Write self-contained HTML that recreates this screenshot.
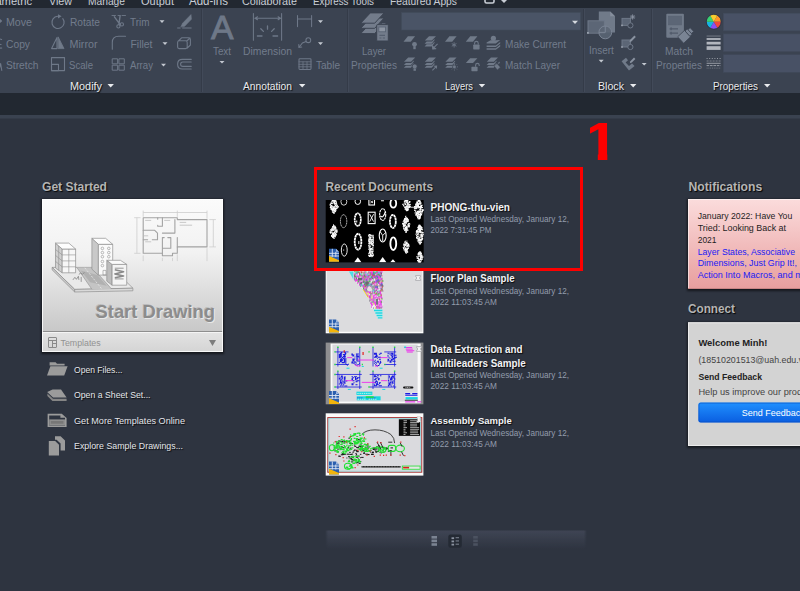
<!DOCTYPE html>
<html lang="en"><head><meta charset="utf-8"><title>AutoCAD Start</title>
<style>
html,body{margin:0;padding:0;background:#2e3440;overflow:hidden}
body{width:800px;height:591px;position:relative;font-family:"Liberation Sans",sans-serif}
svg{position:absolute;left:0;top:0;display:block}
text{font-family:"Liberation Sans",sans-serif;white-space:pre}
.sh{text-shadow:1px 1px 1px rgba(0,0,0,.85)}
.hd{text-shadow:1px 1px 1px rgba(0,0,0,.9)}
.eng{text-shadow:0 1px 0 rgba(255,255,255,.7)}
</style></head><body>
<svg width="800" height="591" viewBox="0 0 800 591">
<defs>
<linearGradient id="gCard" x1="0" y1="0" x2="0" y2="1"><stop offset="0" stop-color="#fbfbfb"/><stop offset=".35" stop-color="#f2f2f2"/><stop offset="1" stop-color="#bdbdbd"/></linearGradient>
<linearGradient id="gTpl" x1="0" y1="0" x2="0" y2="1"><stop offset="0" stop-color="#e3e3e3"/><stop offset="1" stop-color="#d4d4d4"/></linearGradient>
<linearGradient id="gPink" x1="0" y1="0" x2="0" y2="1"><stop offset="0" stop-color="#fbdcdc"/><stop offset="1" stop-color="#e89e9e"/></linearGradient>
<linearGradient id="gBtn" x1="0" y1="0" x2="0" y2="1"><stop offset="0" stop-color="#2090ff"/><stop offset="1" stop-color="#0a5ee0"/></linearGradient>
<linearGradient id="gBar" x1="0" y1="0" x2="0" y2="1"><stop offset="0" stop-color="#3f4554"/><stop offset="1" stop-color="#3f4554" stop-opacity="0"/></linearGradient>
<linearGradient id="gBarM" x1="0" y1="0" x2="1" y2="0"><stop offset="0" stop-color="#fff" stop-opacity="0"/><stop offset=".012" stop-color="#fff"/><stop offset=".988" stop-color="#fff"/><stop offset="1" stop-color="#fff" stop-opacity="0"/></linearGradient>
<mask id="mBar"><rect x="325" y="528" width="262" height="24" fill="url(#gBarM)"/></mask>
<filter id="fsh" x="-10%" y="-10%" width="120%" height="125%"><feGaussianBlur stdDeviation="1.2"/></filter>
</defs>

<rect x="0" y="0" width="800" height="8" fill="#222831"/>
<rect x="0" y="8" width="800" height="85" fill="#3b4351"/>
<rect x="0" y="93" width="800" height="22" fill="#222831"/>
<rect x="0" y="115" width="800" height="3" fill="#3a4250"/><rect x="0" y="118" width="800" height="1" fill="#343b48"/>
<text x="-22" y="5" font-size="11.73" fill="#c9ced6" textLength="54" lengthAdjust="spacingAndGlyphs" >Parametric</text>
<text x="49" y="5" font-size="11.24" fill="#c9ced6" textLength="23" lengthAdjust="spacingAndGlyphs" >View</text>
<text x="88" y="5" font-size="10.75" fill="#c9ced6" textLength="37" lengthAdjust="spacingAndGlyphs" >Manage</text>
<text x="141" y="5" font-size="11.54" fill="#c9ced6" textLength="33" lengthAdjust="spacingAndGlyphs" >Output</text>
<text x="189" y="5" font-size="12" fill="#c9ced6" textLength="39" lengthAdjust="spacingAndGlyphs" >Add-ins</text>
<text x="242" y="5" font-size="11.29" fill="#c9ced6" textLength="55" lengthAdjust="spacingAndGlyphs" >Collaborate</text>
<text x="313" y="5" font-size="10.32" fill="#c9ced6" textLength="61" lengthAdjust="spacingAndGlyphs" >Express Tools</text>
<text x="390" y="5" font-size="10.82" fill="#c9ced6" textLength="67" lengthAdjust="spacingAndGlyphs" >Featured Apps</text>
<rect x="485" y="-3" width="9" height="6" rx="1.5" fill="none" stroke="#c9ced6" stroke-width="1.6"/>
<path d="M501 0 l3 3 l3-3z" fill="#c9ced6"/>
<rect x="201" y="9" width="1" height="83" fill="#343b48"/>
<rect x="202" y="9" width="1" height="83" fill="#424a59"/>
<rect x="347" y="9" width="1" height="83" fill="#343b48"/>
<rect x="348" y="9" width="1" height="83" fill="#424a59"/>
<rect x="583" y="9" width="1" height="83" fill="#343b48"/>
<rect x="584" y="9" width="1" height="83" fill="#424a59"/>
<rect x="651" y="9" width="1" height="83" fill="#343b48"/>
<rect x="652" y="9" width="1" height="83" fill="#424a59"/>
<text x="70" y="89.5" font-size="11.5" fill="#e9ebee" textLength="32" lengthAdjust="spacingAndGlyphs" class="hd" >Modify</text>
<path d="M107.5 84 h6.4 l-3.2 3.6z" fill="#e9ebee"/>
<text x="243" y="89.5" font-size="11.5" fill="#e9ebee" textLength="49" lengthAdjust="spacingAndGlyphs" class="hd" >Annotation</text>
<path d="M299 84 h6.4 l-3.2 3.6z" fill="#e9ebee"/>
<text x="445" y="89.5" font-size="10.82" fill="#e9ebee" textLength="28" lengthAdjust="spacingAndGlyphs" class="hd" >Layers</text>
<path d="M478.75 84 h6.4 l-3.2 3.6z" fill="#e9ebee"/>
<text x="598" y="89.5" font-size="11.5" fill="#e9ebee" textLength="26" lengthAdjust="spacingAndGlyphs" class="hd" >Block</text>
<path d="M630 84 h6.4 l-3.2 3.6z" fill="#e9ebee"/>
<text x="713" y="89.5" font-size="11.45" fill="#e9ebee" textLength="45" lengthAdjust="spacingAndGlyphs" class="hd" >Properties</text>
<path d="M764 84 h6.4 l-3.2 3.6z" fill="#e9ebee"/>
<text x="6" y="25.5" font-size="11.16" fill="#727c8c" textLength="26" lengthAdjust="spacingAndGlyphs" >Move</text>
<text x="6" y="47.5" font-size="10.8" fill="#727c8c" textLength="24" lengthAdjust="spacingAndGlyphs" >Copy</text>
<text x="6" y="69" font-size="10.77" fill="#727c8c" textLength="32.5" lengthAdjust="spacingAndGlyphs" >Stretch</text>
<text x="70" y="25.5" font-size="10.69" fill="#727c8c" textLength="30" lengthAdjust="spacingAndGlyphs" >Rotate</text>
<text x="69.5" y="47.5" font-size="11.26" fill="#727c8c" textLength="28.0" lengthAdjust="spacingAndGlyphs" >Mirror</text>
<text x="69" y="69" font-size="10.07" fill="#727c8c" textLength="24" lengthAdjust="spacingAndGlyphs" >Scale</text>
<text x="130" y="25.5" font-size="10.44" fill="#727c8c" textLength="19.5" lengthAdjust="spacingAndGlyphs" >Trim</text>
<text x="130.5" y="47.5" font-size="10.94" fill="#727c8c" textLength="22.0" lengthAdjust="spacingAndGlyphs" >Fillet</text>
<text x="130" y="69" font-size="10.11" fill="#727c8c" textLength="23" lengthAdjust="spacingAndGlyphs" >Array</text>
<text x="316" y="69" font-size="10.54" fill="#727c8c" textLength="24" lengthAdjust="spacingAndGlyphs" >Table</text>
<text x="505" y="47.5" font-size="10.57" fill="#727c8c" textLength="61" lengthAdjust="spacingAndGlyphs" >Make Current</text>
<text x="505" y="69" font-size="10.5" fill="#727c8c" textLength="55" lengthAdjust="spacingAndGlyphs" >Match Layer</text>
<text x="213" y="55" font-size="10.31" fill="#727c8c" textLength="18" lengthAdjust="spacingAndGlyphs" >Text</text>
<text x="243" y="55" font-size="10.89" fill="#727c8c" textLength="49" lengthAdjust="spacingAndGlyphs" >Dimension</text>
<text x="362" y="55" font-size="10.07" fill="#727c8c" textLength="24" lengthAdjust="spacingAndGlyphs" >Layer</text>
<text x="351" y="69" font-size="10.6" fill="#727c8c" textLength="46" lengthAdjust="spacingAndGlyphs" >Properties</text>
<text x="589" y="54.2" font-size="10.41" fill="#727c8c" textLength="24.8" lengthAdjust="spacingAndGlyphs" >Insert</text>
<text x="665" y="55" font-size="10.8" fill="#727c8c" textLength="28" lengthAdjust="spacingAndGlyphs" >Match</text>
<text x="656" y="69" font-size="10.6" fill="#727c8c" textLength="46" lengthAdjust="spacingAndGlyphs" >Properties</text>
<path d="M159.5 20.2 h5 l-2.5 2.7z" fill="#c3c8d0"/>
<path d="M162.5 42.2 h5 l-2.5 2.7z" fill="#c3c8d0"/>
<path d="M161.0 63.7 h5 l-2.5 2.7z" fill="#c3c8d0"/>
<path d="M318.0 20.2 h5 l-2.5 2.7z" fill="#c3c8d0"/>
<path d="M318.0 42.2 h5 l-2.5 2.7z" fill="#c3c8d0"/>
<path d="M219.5 60.900000000000006 h5 l-2.5 2.7z" fill="#c3c8d0"/>
<path d="M598.7 59.7 h5 l-2.5 2.7z" fill="#c3c8d0"/>
<path d="M641.7 62.900000000000006 h5 l-2.5 2.7z" fill="#c3c8d0"/>
<g fill="none" stroke="#6e7888" stroke-width="1.1" stroke-linecap="round" stroke-linejoin="round">
<path d="M-3 21h4.5M-0.5 19.3l2 1.7l-2 1.7" />
<path d="M1.6 39.5q-3-1.5-3.5 1.5t3 3.5M1.8 48q-3 .5-3.5-2"/>
<path d="M-1 70.5l1.6-7l1.2 7"/>
<path d="M62.800 18.600A6.100 6.100 0 1 1 57.600 16.300"/>
<path d="M58 14.200l3.600 2.100l-3.600 2.100z" fill="#6e7888" stroke="none"/>
<path d="M57 37.6l-5.4 11h5.4z"/>
<path d="M58.3 37.2l5.7 11.4h-5.7z" fill="#707a89" stroke-width=".8"/>
<rect x="51.5" y="57.6" width="13" height="13"/><rect x="51.5" y="64.4" width="7" height="6.2"/>
<path d="M112 15.5h3.5m2.5 0h2m2 0h3.5" stroke-width=".9"/>
<path d="M114.4 16.8l5.6 7.6M120.1 15.8l-1.2 8.6" stroke-width="1.4"/>
<circle cx="118.4" cy="26.4" r="1.6"/><circle cx="121.9" cy="24.4" r="1.6"/>
<path d="M112.3 49.2v-6.8q0-6.2 6.4-6.2h6.8"/>
<rect x="112.6" y="58.8" width="5" height="5" stroke-width="1"/>
<rect x="112.6" y="65.2" width="5" height="5" stroke-width="1"/>
<rect x="119.3" y="58.8" width="5" height="5" stroke-width="1"/>
<rect x="119.3" y="65.2" width="5" height="5" stroke-width="1"/>
<path d="M181 26.6l1.6-3.4l8.4-8.6l.4 4.6l-7 7.2z" fill="#707a89" stroke-width=".6"/>
<path d="M177.6 28h2.6m2.4 0h8.6" stroke-width="1"/>
<path d="M177.6 42.4q0-1.600 1.600-1.600h6.400q1.600 0 1.600 1.600v4.600q0 1.600 -1.600 1.600h-6.400q-1.600 0 -1.600 -1.600zM178.400 41l3.200-3.200h6.800q2 0 2 2v5.200l-3.200 3.200M186.800 41l3.200-3"/>
<path d="M191.200 59.400h-8.800q-4.800 0 -4.800 4.800t4.800 4.800h8.800M191.200 62h-8.400q-2.200 0 -2.200 2.200t2.200 2.200h8.400"/>
</g>
<text x="210.900" y="38.900" font-size="33.500" fill="#6e7888" textLength="22.500" lengthAdjust="spacingAndGlyphs" stroke="#6e7888" stroke-width=".9">A</text>
<g fill="none" stroke="#6e7888" stroke-width="1.05" stroke-linecap="round">
<path d="M253.4 13.4v26.800M281.600 13.4v26.800M255 18.300h25M257.500 16.800l-2.500 1.500l2.500 1.500M278.100 16.800l2.500 1.500l-2.500 1.500"/>
<path d="M267.500 26v3.200M260.800 28.800l2.600 2.600M274.200 28.800l-2.600 2.600M257.400 36h4.600M273 36h4.600" stroke-width="1.300"/>
<path d="M297.500 15.600v11M311.600 15.600v11M297.500 19h14"/>
<circle cx="308.300" cy="40.200" r="2.400"/><path d="M306.100 41.400l-3.700 1.600l-3.300 4.200M298.800 44.600l.1 2.900l2.800-.4"/>
<rect x="299" y="58.800" width="12" height="10.600" rx=".8"/><path d="M299 61.800h12M299 64.300h12M299 66.800h12M303 61.800v7.600M307 61.800v7.600" stroke-width=".8"/>
</g>
<g fill="#707a89" stroke="none">
<path d="M370.300 23.3h13.800l-9.400 10.300h-14z" fill="#737c8b" stroke="#3b4351" stroke-width="1"/>
<path d="M370.300 18.0h13.800l-9.400 10.300h-14z" fill="#737c8b" stroke="#3b4351" stroke-width="1"/>
<path d="M370.300 12.9h13.800l-9.400 10.300h-14z" fill="#737c8b" stroke="#3b4351" stroke-width="1"/>
<rect x="382" y="23.500" width="3.400" height="2" fill="#737c8b"/><rect x="376.700" y="24.600" width="11.600" height="16.400" rx=".8" fill="#737c8b" stroke="#3b4351" stroke-width="1"/><rect x="378.800" y="27" width="6.800" height="4.800" fill="#8d95a2" stroke="#5a6474" stroke-width=".9"/><path d="M379.400 35.400h5.600M379.400 38h2m1.400 0h2.200" stroke="#566070" stroke-width="1.100" fill="none"/>
<path d="M407.9 36.2h7.2l-4.4 5.5h-7.2z"/>
<circle cx="414.500" cy="44.300" r="2.400"/><rect x="413.300" y="46.200" width="2.400" height="3"/>
<path d="M429.0 36.2h7l-4.2 4.2h-7zM424.6 43.7l2.100-2.100h7l-2.100 2.100zM432.2 41.300000000000004l2.300-2.300v1.300l-2.300 2.300zM424.6 46.400000000000006l2.100-2.100h7l-2.100 2.100zM432.2 44.00000000000001l2.300-2.300v1.300l-2.300 2.300z"/>
<path d="M437.600 43.800l-3.800 3.800M432.400 45.400l.4 3.600l3.400-.2" stroke="#6e7888" stroke-width="1.100" fill="none"/><path d="M432.200 45.200l.4 4l3.800-.4z"/>
<path d="M449.4 36.2h7.2l-4.4 5.5h-7.2z"/>
<path d="M454.100 42.300v5.200M451.800 43.600l4.600 2.600M456.400 43.600l-4.600 2.600" stroke="#6e7888" stroke-width=".9" fill="none"/>
<path d="M470.2 36.2h7.2l-4.4 5.5h-7.2z"/>
<rect x="473.200" y="44.600" width="6.400" height="4.800" rx=".6"/><path d="M474.600 44.600v-1.400q0-1.800 1.800-1.800t1.800 1.800v1.400" stroke="#6e7888" stroke-width="1.100" fill="none"/>
<circle cx="493.400" cy="38.300" r="2.600"/>
<path d="M486.600 42.600l4-2.400h5.600l4 -.2l-4.400 3.600h-9.200zM486.600 45.400h9.200l4.400-3.400v1.600l-4.400 3.400h-9.200zM486.600 48.200h9.200l4.400-3.400v1.600l-4.400 3.400h-9.200z"/>
<path d="M408.2 57.6h7l-4.2 4.2h-7zM403.8 65.1l2.100-2.100h7l-2.100 2.100zM411.4 62.7l2.300-2.300v1.300l-2.300 2.300zM403.8 67.8l2.100-2.100h7l-2.100 2.100zM411.4 65.4l2.300-2.300v1.300l-2.300 2.300z"/>
<circle cx="414.700" cy="66.400" r="2.500" stroke="#3b4351" stroke-width=".8"/><rect x="413.500" y="68.400" width="2.400" height="2.400"/>
<path d="M429.0 57.6h7l-4.2 4.2h-7zM424.6 65.1l2.100-2.100h7l-2.100 2.100zM432.2 62.7l2.300-2.300v1.300l-2.300 2.300zM424.6 67.8l2.100-2.100h7l-2.100 2.100zM432.2 65.4l2.300-2.300v1.300l-2.300 2.300z"/>
<path d="M432.400 70.400l4.200-4.200" stroke="#6e7888" stroke-width="1.100" fill="none"/><path d="M437.200 65.400l-.4 3.600l-3.200-3.200z"/>
<path d="M449.59999999999997 57.6h7l-4.2 4.2h-7zM445.2 65.1l2.100-2.100h7l-2.100 2.100zM452.79999999999995 62.7l2.300-2.300v1.300l-2.300 2.300zM445.2 67.8l2.100-2.100h7l-2.100 2.100zM452.79999999999995 65.4l2.300-2.300v1.300l-2.300 2.300z"/>
<circle cx="454.400" cy="66.900" r="1.900" stroke="#3b4351" stroke-width=".7"/><path d="M454.400 63.300v1M454.400 69.500v1M450.800 66.900h1M457 66.900h1M451.900 64.400l.7.700M456.200 68.700l.7.700M456.900 64.400l-.7.700M452.600 68.700l-.7.700" stroke="#6e7888" stroke-width=".8" fill="none"/>
<path d="M470.2 58.2h7.2l-4.4 4.8h-7.2z"/>
<rect x="471.400" y="66.800" width="6.200" height="4.400" rx=".6"/><path d="M475.600 66.800v-1.600q0-1.800 1.800-1.800t1.800 1.800v.8" stroke="#6e7888" stroke-width="1.100" fill="none"/>
<path d="M491.0 57.6h7l-4.2 4.2h-7zM486.6 65.1l2.100-2.100h7l-2.100 2.100zM494.2 62.7l2.300-2.300v1.300l-2.300 2.300zM486.6 67.8l2.100-2.100h7l-2.100 2.100zM494.2 65.4l2.300-2.300v1.300l-2.300 2.300z"/>
<path d="M494 66l3-2.600l3.400 3.800l-3 2.800zM497.600 63l1.600-1.400l1 1.200l-1.400 1.400z" stroke="#3b4351" stroke-width=".5"/>
</g>
<path d="M598.800 11.400h11.400l4.800 4.800v16.200h-16.200z" fill="#707a89"/><path d="M610.200 11.400v4.800h4.800z" fill="#858e9c"/>
<rect x="588" y="20.800" width="16.400" height="12.400" fill="#5c6676" stroke="#6e7888" stroke-width="1"/><rect x="587" y="32" width="1.800" height="1.800" fill="#9aa2ae"/>
<circle cx="605.300" cy="32.400" r="6.400" fill="#5c6676" fill-opacity=".85" stroke="#7a8494" stroke-width="1"/><path d="M605.300 26v6.400h-6.400" stroke="#7a8494" stroke-width="1" fill="none"/>
<rect x="622" y="18.400000000000002" width="8.400" height="7" fill="#5c6676" stroke="#6e7888" stroke-width="1"/><circle cx="630.400" cy="25.4" r="2.600" fill="#3b4351" stroke="#6e7888" stroke-width="1"/><rect x="621.200" y="24.6" width="1.600" height="1.600" fill="#9aa2ae"/>
<path d="M632.600 14.4v5.200M630 17.0h5.200M630.800 15.200000000000001l3.600 3.600M634.400 15.200000000000001l-3.600 3.600" stroke="#8a93a1" stroke-width=".9" fill="none"/>
<rect x="622" y="40.0" width="8.400" height="7" fill="#5c6676" stroke="#6e7888" stroke-width="1"/><circle cx="630.400" cy="47.0" r="2.600" fill="#3b4351" stroke="#6e7888" stroke-width="1"/><rect x="621.200" y="46.2" width="1.600" height="1.600" fill="#9aa2ae"/>
<path d="M629.400 42.0l.6-2l4.400-4.400l1.400 1.400l-4.400 4.400z" fill="#8a93a1"/>
<path d="M621.600 61.200l4.400-3.400l2 2.400l-2.400 2.200l3.400 3.600l3-2.600l2.600 2.600l-5.600 4.600z" fill="#707a89"/><path d="M629.800 63.200l.6-2l3.600-3.600l1.400 1.400l-3.600 3.600z" fill="#8a93a1"/>
<rect x="666.300" y="13.800" width="17.600" height="24" rx="1" fill="#707a89"/><rect x="668.600" y="16.200" width="12.800" height="8.600" fill="#5c6676" stroke="#596373" stroke-width=".8"/><path d="M669.600 28.800h8.400M669.600 33.200h8.400" stroke="#505a6a" stroke-width="1.200"/><rect x="670.400" y="27.400" width="1.400" height="2.800" fill="#505a6a"/><rect x="670.400" y="31.800" width="1.400" height="2.800" fill="#505a6a"/>
<g transform="translate(685.600 35.400) rotate(47)" fill="#7a8494" stroke="#3b4351" stroke-width=".7"><rect x="-4.400" y="-2.600" width="8.800" height="9.400"/><rect x="-2.600" y="-8.600" width="5.200" height="3.400"/><rect x="-3.600" y="-5.600" width="7.200" height="3"/></g>
<path d="M713.75 21.75L717.30 15.60A7.1 7.1 0 0 1 720.85 21.75z" fill="#ff9528"/>
<path d="M713.75 21.75L720.85 21.75A7.1 7.1 0 0 1 717.30 27.90z" fill="#f0483e"/>
<path d="M713.75 21.75L717.30 27.90A7.1 7.1 0 0 1 710.20 27.90z" fill="#8a4ff2"/>
<path d="M713.75 21.75L710.20 27.90A7.1 7.1 0 0 1 706.65 21.75z" fill="#16b4e4"/>
<path d="M713.75 21.75L706.65 21.75A7.1 7.1 0 0 1 710.20 15.60z" fill="#38d272"/>
<path d="M713.75 21.75L710.20 15.60A7.1 7.1 0 0 1 717.30 15.60z" fill="#f6cc2e"/>
<circle cx="713.75" cy="21.75" r="7.500" fill="none" stroke="#2d3441" stroke-width=".8"/>
<g fill="#b3b7bf"><rect x="706.600" y="35.600" width="14" height=".9" opacity=".55"/><rect x="706.600" y="38.100" width="14" height="1.800"/><rect x="706.600" y="41.800" width="14" height="2.700"/><rect x="706.600" y="46.200" width="14" height="3.700"/></g>
<g stroke="#aeb2ba" stroke-width="1" fill="none" opacity=".8"><path d="M706.600 58.500h14" stroke-dasharray="1 1.600"/><path d="M706.600 61h14" stroke-dasharray="2 1" opacity=".7"/><path d="M706.600 63.300h14"/><path d="M706.600 65.600h14" stroke-dasharray="2.600 .8"/><path d="M706.600 68.100h14" stroke-dasharray="1 .8" opacity=".55"/></g>
<rect x="401.500" y="12.500" width="179" height="17.500" fill="#4a5466" stroke="#424b5b" stroke-width=".6"/>
<path d="M572.0 20.7 h6 l-3.0 3.2z" fill="#d5d9df"/>
<rect x="723.300" y="13.2" width="80" height="17.600" fill="#485165" stroke="#414a5a" stroke-width=".6"/>
<rect x="723.300" y="33.9" width="80" height="17.600" fill="#485165" stroke="#414a5a" stroke-width=".6"/>
<rect x="723.300" y="54.7" width="80" height="17.600" fill="#485165" stroke="#414a5a" stroke-width=".6"/>
<text x="42" y="191" font-size="12.5" fill="#b4b4b4" textLength="65" lengthAdjust="spacingAndGlyphs" font-weight="bold" class="hd" >Get Started</text>
<rect x="41" y="199" width="183" height="155" fill="#000" opacity=".55" filter="url(#fsh)"/>
<rect x="42" y="199" width="181" height="153" fill="url(#gCard)"/>
<rect x="42" y="332" width="181" height="20" fill="url(#gTpl)"/>
<rect x="42" y="331" width="181" height="1" fill="#8e8e8e"/>
<rect x="42" y="332" width="181" height="1" fill="#f4f4f4"/>
<rect x="42.5" y="199.5" width="180" height="152" fill="none" stroke="#fff" stroke-opacity=".8"/>
<text x="95.5" y="318" font-size="18.5" fill="#8c8c8c" textLength="119.5" lengthAdjust="spacingAndGlyphs" font-weight="bold" style="text-shadow:1px 1px 0 rgba(255,255,255,.55),-1px -1px 0 rgba(0,0,0,.12)">Start Drawing</text>
<text x="60.5" y="345.5" font-size="9.26" fill="#929292" textLength="40.2" lengthAdjust="spacingAndGlyphs" >Templates</text>
<path d="M209 340 h7 l-3.5 6z" fill="#7d7d7d"/>
<g fill="none" stroke="#8a8a8a" stroke-width="1"><rect x="48.5" y="337.5" width="8" height="10" rx=".5"/><path d="M48.5 340.5h8M52.5 340.5v7M52.5 343.5h4"/></g>
<g stroke="#8f8f8f" stroke-width=".7" stroke-linejoin="round" fill="none">
<polygon points="52.1,267.4 111.5,267.4 132.9,288.2 74.7,289.4" fill="#e9e9e9"/>
<polygon points="52.1,267.4 74.7,289.4 74.7,292.0 52.1,269.8" fill="#c9c9c9"/>
<polygon points="74.7,289.4 132.9,288.2 132.9,290.8 74.7,292.0" fill="#d9d9d9"/>
<polygon points="77.1,267.8 92.5,267.8 111.5,288.9 91.9,289.3" fill="#c4c4c4" stroke="none"/>
<polygon points="80.6,270.4 97.3,275.1 106.8,285.8 90.1,282.3" fill="#aaa" stroke="none" opacity=".7"/>
<path d="M84.8 267.8L101.8 289.0" stroke="#eee" stroke-width=".7" stroke-dasharray="2 1.5"/>
<path d="M92.5 267.8L111.5 288.9M77.1 267.8L91.9 289.3" stroke-width=".6"/>
<path d="M72.9 279.9l2-2.600l1.500 2l2-3l.500 3.600M78.8 274.5l2-1.600l1.500 1.500l2-2M81.2 276.9v5" stroke="#777" stroke-width=".7"/>
<polygon points="55.5,243.1 62.2,249.0 62.2,272.8 55.5,268.0" fill="#cfcfcf"/>
<polygon points="62.2,249.0 75.6,249.0 75.6,272.8 62.2,272.8" fill="#f7f7f7"/>
<polygon points="55.5,243.1 68.8,243.1 75.6,249.0 62.2,249.0" fill="#fdfdfd"/>
<path d="M62.2 254.9H75.6M62.2 254.9L55.5 249.5M62.2 260.9H75.6M62.2 260.9L55.5 255.4M62.2 266.8H75.6M62.2 266.8L55.5 261.4M68.8 249.0V272.8M58.7 245.9V270.4" stroke-width=".6"/>
<polygon points="91.9,238.3 98.4,244.3 98.4,275.1 91.9,269.2" fill="#c9c9c9"/>
<polygon points="98.4,244.3 112.7,244.3 112.7,275.1 98.4,275.1" fill="#fafafa"/>
<polygon points="91.9,238.3 105.6,238.3 112.7,244.3 98.4,244.3" fill="#fdfdfd"/>
<circle cx="102.4" cy="248.4" r="1.300" stroke-width=".6"/>
<circle cx="102.4" cy="252.6" r="1.300" stroke-width=".6"/>
<circle cx="102.4" cy="256.7" r="1.300" stroke-width=".6"/>
<circle cx="102.4" cy="261.5" r="1.300" stroke-width=".6"/>
<circle cx="102.4" cy="265.6" r="1.300" stroke-width=".6"/>
<circle cx="108.8" cy="248.4" r="1.300" stroke-width=".6"/>
<circle cx="108.8" cy="252.6" r="1.300" stroke-width=".6"/>
<circle cx="108.8" cy="256.7" r="1.300" stroke-width=".6"/>
<circle cx="108.8" cy="261.5" r="1.300" stroke-width=".6"/>
<circle cx="108.8" cy="265.6" r="1.300" stroke-width=".6"/>
<rect x="103.0" y="270.4" width="3" height="4.600" stroke-width=".6"/>
<polygon points="106.8,260.3 112.1,264.4 112.1,285.2 106.8,281.1" fill="#bdbdbd"/>
<polygon points="112.1,264.4 126.7,264.4 126.7,285.2 112.1,285.2" fill="#f4f4f4"/>
<polygon points="106.8,260.3 120.4,260.3 126.7,264.4 112.1,264.4" fill="#fbfbfb"/>
<path d="M114.8 268.2H123.6M114.8 278.9H123.6" stroke="#999" stroke-width="1"/>
<path d="M114.8 269.8L123.6 271.8L114.8 273.9L123.6 276.1L114.8 277.7" stroke="#8a8a8a" stroke-width="1.500"/>
</g>
<g fill="none" stroke="#a3a3a3" stroke-width="1.100" stroke-linejoin="round" stroke-linecap="round">
<path d="M143.2 217.7H177.3V219.6H207.0V246.9H177.3V253.3H172.5V255.7H162.4V253.3H143.2z"/>
<path d="M162.4 217.7V226.3H157.7V225.2M157.7 217.7V219.3M174.9 219.6V233.1H162.4M143.2 230.3H154.7L157.5 233.1V239.8H152.3M143.2 239.8H147.6M162.4 253.3V237.6H164.2M167.8 237.6H170.8V248.3H162.4M177.3 246.9V237.6"/>
</g>
<g fill="none" stroke="#cdcdcd" stroke-width=".8">
<path d="M143.2 212.5H207.0M143.2 210.6V216.8M177.3 210.6V216.8M207.0 210.6V218.6M136.9 217.7V253.3M134.2 217.7H140.5M134.2 253.3H140.5M213.3 219.6V246.9M209.3 219.6H215.9M209.3 246.9H215.9M143.2 255.4V261.1M162.4 257.8V261.1M172.5 257.8V261.1M177.3 254.3V261.1M207.0 248.3V261.1"/>
<path d="M145.2 220.4H151.2M164.2 220.4H170.2M179.7 222.4H186.2M179.7 225.2H192.1M143.4 235.8H148.2M145.2 241.8H151.2" stroke="#bdbdbd"/>
</g>
<text x="74" y="373" font-size="8.98" fill="#e4e6ea" textLength="48.5" lengthAdjust="spacingAndGlyphs" class="sh" >Open Files...</text>
<text x="74" y="398.2" font-size="9.15" fill="#e4e6ea" textLength="76.5" lengthAdjust="spacingAndGlyphs" class="sh" >Open a Sheet Set...</text>
<text x="74" y="423.7" font-size="9.59" fill="#e4e6ea" textLength="111" lengthAdjust="spacingAndGlyphs" class="sh" >Get More Templates Online</text>
<text x="74" y="449.4" font-size="9.28" fill="#e4e6ea" textLength="109" lengthAdjust="spacingAndGlyphs" class="sh" >Explore Sample Drawings...</text>
<g fill="#9b9b9b">
<path d="M49.600 362.200h6l1.400 1.600h7.600v1.600h-15z"/><path d="M50.400 366.200h17.200l-3.400 9.300h-17.200z"/>
<path d="M52.600 389.600h8.400l5.600 8h-13.600l-5.800-5.600z" /><path d="M47.400 393.400l5.600 5.400h13.600v2.200h-14.200l-5-5z" fill="#858585"/>
<path d="M47.600 413.800h14.200l4.800 4.200v9h-19z" /><path d="M49.200 415.400h11.200v2.400h4.600v7.600h-15.800z" fill="#2e3440"/><path d="M49.200 419.400h15.800v6h-15.800z" fill="#8e8e8e"/><path d="M50.800 421h12.600v2.800h-12.600z" fill="#777"/>
<path d="M55 436.200h5.600l4.400 4.200v10h-4.400v-7l-4-3.600h-1.600z"/><path d="M48.800 441h6.400l3.800 3.800v10.700h-10.200z"/>
</g>
<text x="325.5" y="191" font-size="12.46" fill="#b4b4b4" textLength="107.5" lengthAdjust="spacingAndGlyphs" font-weight="bold" class="hd" >Recent Documents</text>
<g><clipPath id="c1"><rect x="325.7" y="200" width="98" height="62.4"/></clipPath>
<rect x="325.7" y="200" width="98" height="62.4" fill="#000"/><g clip-path="url(#c1)" fill="none" stroke="#fff">
<path d="M332.9 208.9h1.3M336.6 208.0h0.8M332.8 207.8h1.3M333.6 208.6h1M334.6 207.1h1M336.0 208.1h0.8M331.9 201.6h0.8M331.5 203.6h0.8M336.7 208.0h1M331.3 208.7h1.3M332.6 212.4h0.8M335.3 209.5h0.8M331.9 210.1h0.8M330.9 203.5h1M332.7 201.3h1M329.8 207.5h1M332.8 212.4h1.3M333.6 203.3h1M329.8 204.8h1.3M330.7 207.8h0.8M334.9 209.4h1M334.5 210.4h0.8M334.7 205.3h1.3M330.6 202.8h1M332.6 209.9h1M331.4 203.4h0.8M335.8 204.1h1.3M336.2 208.5h1M331.8 199.9h1M333.1 210.7h1.3M331.9 212.0h1M333.9 208.6h0.8M333.7 210.2h1.3M333.4 210.9h1M335.4 208.5h1.3M333.3 209.1h1M334.5 202.7h1M336.8 205.4h1M335.0 205.1h0.8M334.7 211.0h0.8M330.3 206.5h1M333.2 209.2h1.3M331.9 210.2h0.8M332.8 200.7h1.3M332.1 200.5h1M335.7 201.9h1.3M333.9 201.2h1M331.7 209.3h1M334.5 206.9h0.8M332.1 207.0h1.3M334.2 206.5h0.8M329.8 204.2h1.3M337.1 207.1h1.3M331.8 210.3h1M331.7 202.7h0.8M335.0 199.8h1M331.1 206.5h0.8M334.9 208.7h1M330.1 206.8h1.3M337.3 207.0h1.3M331.9 210.8h0.8M333.5 201.5h1.3M335.0 201.1h1M329.6 205.1h1M333.7 200.3h1.3M332.8 209.4h0.8M334.2 199.4h1.3M333.8 202.4h1M333.0 207.6h0.8M333.8 200.7h0.8M332.6 199.0h1M334.2 199.8h1M335.7 204.6h0.8M335.2 209.2h1M334.0 211.8h1.3M334.4 201.4h1.3M332.2 211.1h1.3M334.8 209.3h1.3M333.4 200.5h0.8M330.9 208.4h0.8M334.2 198.8h1M330.2 207.5h0.8M333.3 202.5h0.8M336.4 207.0h1M333.8 202.8h1.3M336.7 205.2h1M334.5 210.7h0.8M337.4 206.6h1.3M335.6 209.9h0.8M330.5 208.8h0.8M335.4 206.6h1.3M333.5 211.9h1M330.1 204.0h0.8M335.1 203.4h1M332.2 200.0h1.3M330.6 209.4h1.3M334.3 208.4h1.3M336.2 206.5h0.8M331.3 201.7h0.8M334.3 210.7h1.3M334.1 207.7h1.3M330.4 205.3h0.8M334.1 204.3h0.8M333.1 212.6h1.3M332.5 206.6h0.8M330.8 208.1h1.3M332.2 203.6h1M330.8 207.6h1M331.2 205.7h1.3M335.4 200.8h1M336.2 202.6h0.8M334.0 203.2h0.8M332.0 208.8h1.3M333.5 208.6h1.3M333.1 208.9h0.8M336.1 203.6h1M335.0 211.6h1M333.9 213.2h1M334.4 203.7h1.3M334.0 203.0h1M336.2 205.8h1M333.9 210.2h1.3M332.3 209.4h1M332.6 206.7h1M331.1 205.5h0.8M335.6 210.7h0.8M334.9 205.4h1M333.1 213.1h0.8M333.3 209.1h1M334.7 200.8h1M331.5 209.1h1.3M330.8 203.2h0.8M333.0 212.7h0.8M332.4 207.1h0.8M331.7 200.8h0.8" stroke-width="1"/>
<path d="M332.1 229.5h1M334.3 228.1h1M335.7 231.6h1M332.6 230.3h1.3M333.2 234.5h0.8M333.1 235.0h1M331.8 228.0h0.8M332.8 236.7h0.8M332.9 238.0h1M334.0 232.2h1.3M331.7 230.7h1M333.2 236.6h1.3M333.8 227.5h1M330.1 229.9h1.3M332.8 235.1h0.8M332.0 237.1h1.3M333.0 228.8h1M336.5 231.0h0.8M335.6 234.4h1M332.3 232.7h1.3M334.4 226.3h1.3M335.9 230.8h1.3M332.8 236.5h0.8M333.1 233.4h1M336.4 230.1h1.3M332.9 233.6h1M333.4 235.0h1M331.8 235.1h1.3M332.4 228.7h0.8M335.4 235.2h0.8M332.5 233.0h0.8M332.6 237.1h0.8M331.3 229.1h0.8M332.0 226.8h1.3M331.9 234.4h1M334.4 236.6h1.3M334.5 236.8h1.3M334.9 228.3h1.3M332.7 226.9h1.3M333.2 226.4h0.8M334.0 227.0h1.3M332.4 226.4h0.8M333.9 232.8h1.3M332.5 233.8h1M330.7 229.8h1.3M331.3 231.1h1M336.6 231.9h1.3M335.9 229.1h0.8M332.7 229.8h1.3M330.0 232.8h1M333.3 237.8h0.8M333.0 224.9h1M333.6 229.8h1.3M333.0 233.9h1.3M332.6 229.9h0.8M332.2 236.7h1.3M332.6 236.8h0.8M330.6 232.3h1.3M334.3 233.8h1M332.8 236.7h1M330.2 233.1h1.3M333.8 238.3h1M335.7 232.3h1.3M335.5 230.8h1M331.2 236.1h0.8M334.2 232.9h1.3M329.7 230.8h0.8M331.4 228.4h1M334.9 227.9h0.8M329.6 231.9h1M334.0 232.0h1M332.5 227.6h1.3M334.1 235.1h1M334.3 234.7h1M333.2 225.4h0.8M334.6 230.5h0.8M334.5 229.5h1M335.0 233.6h1.3M335.8 234.9h1M334.0 228.7h0.8M333.8 228.4h0.8M333.2 235.6h1.3M332.4 237.4h1M335.0 227.6h1.3M331.0 235.6h1.3M330.5 230.0h0.8M335.1 229.9h1.3M333.2 226.1h1M329.6 232.4h1.3M334.4 235.3h1M332.9 235.5h1.3M335.1 231.2h1.3M333.3 236.7h1.3M332.2 233.7h0.8M335.1 234.1h1M331.0 230.3h1M335.8 231.7h0.8M331.5 230.7h0.8M332.7 233.9h0.8M331.6 236.4h0.8M335.0 227.8h1M331.4 235.8h0.8M332.0 234.7h0.8M330.2 231.8h1M334.5 235.4h1.3M333.7 225.5h0.8M333.0 235.5h1M332.1 228.0h1M334.5 226.5h0.8M334.4 235.1h1M335.6 230.8h0.8M331.1 236.0h1.3" stroke-width="1"/>
<ellipse cx="343.86" cy="201.57" rx="2.98" ry="3.64" stroke-width="0.8"/>
<ellipse cx="343.6" cy="221.18" rx="3.18" ry="6.49" stroke-width="0.8" stroke-dasharray="1.2 .5"/>
<ellipse cx="344.26" cy="250.06" rx="2.92" ry="6.1" stroke-width="0.9"/>
<path d="M343.2 250.06h1" stroke-width="1"/>
<ellipse cx="357.78" cy="201.3" rx="2.78" ry="3.18" stroke-width="1"/>
<ellipse cx="357.78" cy="219.59" rx="3.05" ry="6.36" stroke-width="1.7" stroke-dasharray="2 .4"/>
<ellipse cx="358.04" cy="241.71" rx="3.31" ry="7.95" stroke-width="1.8" stroke-dasharray="2.4 .4"/>
<path d="M354.2 262.25l3.6 -5.0l3.6 5.0z" fill="#fff" stroke="none"/>
<path d="M356.72 220.51v2M358.84 241.05v3" stroke-width="1"/>
<rect x="368.9" y="198.9" width="5.6" height="6.1" stroke-width="1.1"/>
<path d="M370.4 200.9l2.6 2.1M373.0 200.9l-2.6 2.1" stroke-width=".9"/>
<rect x="368.2" y="212.2" width="6.9" height="11.4" stroke-width="1.1"/>
<path d="M369.7 214.2l3.9 7.4M373.6 214.2l-3.9 7.4" stroke-width=".9"/>
<path d="M372.2 256.3h1M369.3 236.9h1M368.9 246.2h1M371.4 255.6h1M371.6 249.0h1M371.8 244.7h1M370.8 235.3h1M371.9 239.7h1M372.6 249.0h1M369.6 237.3h1M369.3 248.8h1M371.5 237.0h1M368.5 246.2h1M370.9 243.2h1M369.2 248.0h1M368.2 241.2h1M370.3 256.0h1M371.2 254.3h1M370.4 239.7h1M369.3 256.1h1M371.5 241.4h1M368.2 245.7h1M371.4 243.9h1M369.4 249.5h1M372.6 239.5h1M368.3 242.0h1M370.1 249.8h1M369.1 252.4h1M371.7 245.8h1M369.1 256.3h1M369.6 252.9h1M369.2 239.4h1M371.8 241.1h1M372.7 245.6h1M369.0 239.5h1M370.1 249.4h1M372.7 237.7h1M370.0 239.2h1M372.8 237.6h1M368.4 235.8h1M370.0 254.7h1M372.4 250.9h1M372.9 255.4h1M369.7 238.6h1M372.6 251.2h1M368.3 249.4h1M369.9 242.8h1M369.7 238.2h1M368.1 240.7h1M369.8 255.9h1M368.7 256.1h1M369.1 242.5h1M372.1 252.9h1M370.2 235.5h1M370.4 242.8h1M372.6 238.8h1M369.9 254.6h1M368.3 243.7h1M372.0 251.7h1M368.3 235.2h1M368.4 255.2h1M369.4 251.3h1M372.5 242.1h1M369.4 256.0h1M371.1 240.3h1M371.6 241.6h1M369.4 234.5h1M371.8 255.1h1M371.2 255.7h1M368.2 239.7h1M370.4 256.0h1M372.7 243.1h1M369.3 244.1h1M370.5 255.3h1M369.0 252.5h1M371.7 253.0h1M371.8 248.1h1M369.7 241.6h1M369.9 252.0h1M368.5 238.9h1M371.7 240.0h1M368.4 235.2h1M370.8 241.8h1M372.8 254.3h1M372.9 240.4h1M368.5 236.6h1M370.5 250.4h1M370.3 239.7h1M370.1 248.4h1M371.4 251.3h1M372.2 249.4h1M368.7 253.4h1M369.5 247.2h1M369.9 251.1h1M369.1 240.0h1M369.3 237.9h1M372.4 247.5h1M369.7 243.3h1M372.9 245.9h1M369.2 252.6h1M371.3 256.7h1M368.6 245.1h1M372.1 253.4h1M372.5 235.3h1M369.5 237.1h1M369.0 256.3h1M370.9 255.4h1M369.9 253.9h1M370.3 240.3h1M371.9 255.7h1M368.6 247.9h1M371.1 239.3h1M369.9 237.6h1M369.1 240.2h1M371.0 249.1h1M369.1 234.7h1M369.7 249.7h1M369.0 241.5h1M369.1 252.3h1M370.8 235.9h1M368.6 243.3h1M370.8 248.8h1M368.6 238.1h1M371.5 243.7h1M369.5 241.4h1M372.7 241.5h1M370.8 242.5h1M370.1 253.9h1M372.9 242.6h1M369.1 250.8h1M369.1 234.6h1M372.5 244.0h1M372.1 243.6h1M372.4 244.8h1M368.9 234.8h1M370.8 248.9h1M372.5 236.4h1M371.1 242.8h1M370.5 237.7h1M369.5 246.2h1M372.6 236.9h1M370.5 252.6h1M372.8 238.9h1M368.7 255.7h1M372.8 245.3h1M368.4 255.3h1M370.0 254.8h1M371.1 253.0h1M368.9 252.1h1M369.2 243.5h1M372.2 253.1h1M369.0 239.3h1M370.0 246.1h1M370.0 237.2h1M369.3 250.8h1M372.4 235.4h1M370.8 251.5h1M368.3 253.3h1M368.7 247.9h1M370.8 248.6h1M369.6 243.9h1M370.9 244.0h1M371.3 244.5h1M370.2 235.0h1" stroke-width="1"/>
<path d="M380.96 200.77h3" stroke-width="1"/>
<ellipse cx="382.69" cy="214.55" rx="3.05" ry="5.83" stroke-width="1.1" stroke-dasharray="2.2 .5"/>
<ellipse cx="382.69" cy="235.49" rx="3.45" ry="6.49" stroke-width="1.1"/>
<path d="M382.69 235.49l-2.6 -4M382.69 235.49l3 -3M382.69 235.49v5.5" stroke-width=".9"/>
<path d="M380.3 215.88q3 3 5 -4" stroke-width="1.2"/>
<path d="M378.98 262.25l3.7 -5.3l3.7 5.3z" fill="#fff" stroke="none"/>
<path d="M390.24 262.25l2.7 -2.9l2.7 2.9z" fill="#fff" stroke="none"/>
<ellipse cx="393.29" cy="203.29" rx="2.92" ry="4.37" stroke-width="1.8"/>
<ellipse cx="392.89" cy="221.44" rx="2.92" ry="6.49" stroke-width="1.8" stroke-dasharray="2.5 .4"/>
<ellipse cx="393.29" cy="243.7" rx="2.92" ry="6.36" stroke-width="1.9"/>
<path d="M404.8 201.5h0.8M403.7 206.3h1M407.5 199.7h1M407.3 206.2h1M404.7 208.9h1.3M405.1 204.5h1.3M408.1 209.0h1M406.6 200.1h0.8M406.3 198.6h1.3M407.7 203.8h0.8M409.8 204.5h0.8M407.1 210.5h1M405.8 210.2h0.8M405.5 199.6h0.8M408.2 206.2h1M407.6 209.6h1M408.1 202.2h1M402.4 204.5h0.8M404.2 201.9h0.8M406.0 206.3h0.8M404.3 207.5h1M405.3 199.2h0.8M406.6 201.3h1.3M409.5 206.4h1M403.8 203.0h0.8M406.3 209.3h1M406.2 200.6h1M409.4 204.3h1M405.9 206.6h0.8M407.2 209.5h0.8M405.8 209.0h1M404.6 199.8h1.3M409.1 202.0h1.3M407.5 204.6h0.8M405.8 209.5h1M402.6 204.1h0.8M403.2 205.0h0.8M407.2 204.8h1M405.7 209.0h1.3M406.6 209.4h1.3M407.5 207.6h1M406.7 205.9h0.8M405.9 200.4h0.8M404.7 200.1h1M404.9 206.6h0.8M409.3 206.6h1M404.3 201.9h1.3M409.0 202.5h0.8M406.6 205.8h0.8M403.9 203.8h0.8M407.6 209.7h0.8M409.3 205.0h0.8M407.1 207.0h1.3M404.9 200.6h1M406.7 201.9h1M408.8 206.6h1.3M406.7 199.4h0.8M404.9 207.6h1M408.6 207.1h0.8M406.4 207.0h0.8M405.6 202.6h1.3M409.1 201.8h1M406.0 201.2h1.3M405.4 199.9h1.3M408.4 204.0h0.8M408.3 207.0h0.8M406.2 207.9h1.3M406.6 207.3h1M406.9 208.4h1.3M406.4 210.6h1.3M409.1 201.7h1.3M402.9 205.7h1.3M407.4 204.7h1.3M406.5 210.5h0.8M404.5 207.7h1.3M407.4 203.2h0.8M408.1 207.9h0.8M405.7 206.9h0.8M407.9 205.1h1.3M404.8 200.7h1.3M409.5 206.3h1M407.0 210.5h1.3M407.1 203.3h1.3M407.6 203.8h0.8M406.5 206.3h1.3M408.6 207.5h1.3M406.1 206.9h0.8M406.8 199.7h1M405.6 208.5h0.8M404.8 209.5h0.8M406.0 200.7h1M406.5 199.7h1M407.5 200.6h0.8M406.5 202.9h1.3M406.5 200.8h1.3M408.9 206.0h1.3M406.9 202.8h1M406.6 205.9h0.8M405.8 210.0h0.8M409.2 204.7h1M405.6 199.2h1M403.8 201.2h1.3M406.2 210.7h1M407.2 199.0h0.8M404.7 204.6h1.3M406.5 200.1h1.3M405.1 203.7h1M405.2 207.9h1" stroke-width="1"/>
<path d="M407.5 220.0h1M406.2 223.0h0.8M405.2 229.8h1.3M403.2 224.4h1.3M405.8 230.2h1.3M403.6 220.6h1.3M404.7 220.4h1M402.3 223.4h1M404.6 218.4h0.8M402.8 226.1h1M404.5 222.9h1M404.3 219.0h1.3M406.1 229.0h1.3M406.5 218.6h1.3M406.4 228.2h1M404.3 221.4h0.8M405.1 228.0h1.3M407.4 224.4h1.3M407.1 227.7h0.8M406.2 217.6h1M405.5 227.7h0.8M405.2 232.2h1M407.9 225.6h1M405.1 218.9h1.3M405.5 226.6h1M404.2 221.2h1.3M405.7 232.2h1.3M403.2 221.2h1M406.8 218.8h1.3M407.4 219.5h1.3M404.3 222.3h0.8M404.5 220.0h1M405.5 231.5h1M405.7 229.9h1.3M404.7 221.3h1M404.7 224.7h1M402.7 223.7h0.8M407.0 221.4h0.8M404.1 228.3h0.8M408.1 226.0h0.8M405.2 216.6h0.8M404.3 224.1h1.3M404.0 225.6h1M402.6 224.0h1M403.3 223.7h1M406.1 231.2h1M402.1 223.8h1.3M407.9 224.0h0.8M405.6 229.8h0.8M408.1 225.0h1M404.1 219.5h1.3M405.5 228.7h1.3M403.4 229.2h0.8M409.3 224.2h1M405.9 227.8h0.8M406.3 218.3h1M404.3 219.0h0.8M404.4 229.8h1M403.7 225.4h1.3M404.4 218.5h1M404.2 230.6h1M405.1 217.8h1M404.9 219.2h1.3M406.1 219.6h1.3M405.1 230.1h1M405.0 222.4h1M406.4 228.4h1M408.4 227.1h1M405.8 221.0h1M405.2 222.9h0.8M405.8 227.2h1M405.6 227.7h0.8M406.4 221.4h1M405.0 227.5h1M405.9 220.8h1.3M403.7 219.8h1.3M407.4 220.9h1.3M406.3 221.1h1.3M405.8 227.3h1M405.2 221.6h0.8M405.5 228.8h0.8M403.0 225.5h1M404.2 225.2h1M405.7 228.2h1.3M406.0 223.0h1M403.0 225.8h1.3M405.2 230.1h1M403.1 228.5h0.8M406.2 229.2h1.3M408.4 225.7h1.3M405.5 216.2h0.8M403.0 224.1h0.8M408.5 226.0h1.3M406.3 226.7h1.3M404.4 228.9h1.3M402.7 221.8h1M403.7 226.7h1.3M407.4 226.0h1M406.4 219.7h1.3M409.1 223.7h1M408.5 223.4h0.8M405.0 228.8h1M407.4 230.4h0.8M405.8 222.1h1.3M403.6 222.7h1.3M407.5 226.0h0.8M408.6 226.7h1M403.9 220.2h1.3M407.6 221.0h1.3M406.9 230.0h1.3M403.7 220.6h0.8M408.3 226.1h1.3M405.7 221.3h0.8M406.8 220.4h0.8M407.7 221.0h1M406.4 221.9h1M404.0 222.8h1M405.9 226.7h0.8M403.3 227.3h0.8M402.8 224.6h0.8M405.9 219.0h1.3M407.4 221.7h0.8M404.9 218.6h1.3M408.2 223.8h1M404.5 223.6h1M405.9 228.0h0.8M405.0 225.4h1.3M407.5 230.1h0.8M405.8 227.8h1M408.7 225.3h0.8M402.9 226.7h0.8M404.2 229.9h1.3M407.0 218.9h0.8" stroke-width="1"/>
<path d="M405.3 251.9h1M403.0 248.6h1M406.3 245.9h0.8M406.4 247.1h1.3M405.1 242.1h1M405.0 252.3h0.8M408.1 245.4h1.3M407.2 248.5h1.3M405.5 242.4h0.8M406.8 251.7h1M406.8 246.2h1M403.0 247.9h1M407.9 245.0h1.3M405.1 250.2h1.3M408.1 246.1h1.3M404.9 251.6h0.8M406.4 242.5h1M403.5 243.7h0.8M404.3 250.9h1.3M405.8 243.6h1M405.6 248.5h1M405.6 250.0h0.8M405.5 249.8h1.3M406.9 252.2h1.3M404.9 241.2h1M403.5 245.9h1M405.9 243.9h1.3M406.9 245.6h1.3M407.3 248.5h1.3M405.9 250.5h0.8M406.0 242.5h0.8M403.9 246.1h0.8M405.8 252.1h1M406.9 243.8h1M404.1 246.9h0.8M405.9 249.9h1.3M405.3 252.0h1M404.2 249.8h0.8M405.7 253.4h1M405.0 248.8h1.3M404.6 247.6h1M404.5 244.7h1.3M405.0 245.5h0.8M408.5 246.6h1M404.6 245.3h1M403.4 249.9h1.3M406.4 241.1h1M406.3 243.7h0.8M405.2 248.3h0.8M403.3 244.8h1M402.8 247.5h0.8M406.7 242.9h0.8M405.5 244.7h1M403.7 244.9h1.3M404.2 246.9h0.8M404.9 249.5h1.3M405.7 248.9h1M406.4 246.2h1.3M407.4 243.6h0.8M405.6 251.9h1.3M404.4 241.8h0.8M406.8 249.3h0.8M407.7 245.0h1M404.2 244.6h1.3M406.7 249.5h1M404.5 249.7h1M406.1 250.1h0.8M407.6 243.8h1M405.5 243.9h0.8M406.6 252.1h0.8M407.9 244.5h1.3M406.6 250.5h0.8M407.1 245.1h0.8M404.6 243.7h1M405.2 250.1h0.8M405.0 245.0h0.8M405.6 243.9h1M404.5 246.1h0.8M405.5 251.4h0.8M407.9 247.8h1M405.2 249.6h1M406.9 249.9h1M407.3 251.3h0.8M404.3 242.7h0.8M403.4 244.8h0.8M405.6 250.3h1M404.4 248.5h0.8M406.5 245.9h1" stroke-width="1"/>
<path d="M416.8 211.5h1.3M420.1 208.7h1.3M422.3 210.2h1M415.1 208.8h1.3M417.8 215.3h0.8M419.8 206.6h1.3M419.3 217.6h1.3M418.5 200.9h0.8M415.6 203.9h1.3M417.9 200.6h0.8M418.8 216.8h1.3M417.2 205.8h1M418.5 212.4h1.3M414.1 208.1h0.8M415.5 208.5h1M419.7 201.5h1M420.2 212.8h1M420.0 215.3h0.8M419.2 217.6h1M421.8 211.2h1.3M417.5 207.9h1.3M421.7 205.2h0.8M420.3 215.1h1M418.7 200.1h1.3M418.2 206.0h0.8M421.1 207.2h1.3M422.2 210.7h0.8M422.6 210.5h0.8M417.1 206.2h1M418.2 218.3h0.8M422.5 210.4h1.3M418.5 211.7h1.3M416.8 204.0h0.8M417.9 205.6h0.8M418.1 206.3h0.8M415.0 210.9h1M419.3 211.8h0.8M416.1 207.9h0.8M419.6 215.4h1.3M415.5 215.1h0.8M420.6 206.8h1M415.9 204.8h0.8M415.6 215.1h1M417.4 213.7h1M417.7 200.3h1.3M419.1 200.3h1M418.8 206.7h1.3M419.8 215.9h1M418.2 215.9h1.3M420.0 209.5h0.8M420.6 212.1h1.3M417.5 204.8h1M422.0 207.6h1M416.3 202.6h0.8M421.6 211.0h1M420.8 205.3h1.3M414.3 206.7h1.3M419.4 211.6h0.8M414.7 213.2h1M419.8 213.2h0.8M420.1 214.6h1.3M419.3 207.2h1.3M416.4 208.3h0.8M413.9 208.6h1M416.4 206.7h1.3M420.6 213.2h1M416.2 204.4h1.3M416.3 214.2h1M415.1 211.1h1.3M414.2 210.5h0.8M418.3 214.3h1.3M414.3 206.5h1M421.1 209.7h0.8M417.5 214.6h1M417.7 218.9h1M419.2 210.2h1.3M421.6 213.0h1M417.0 203.1h1M416.6 216.2h1.3M418.6 218.9h1.3M420.6 206.6h1.3M416.7 215.9h1.3M416.8 205.7h1.3M421.0 214.4h1M418.0 217.2h1.3M419.5 207.2h0.8M422.4 209.5h1.3M419.8 213.6h1.3M419.9 216.7h1M420.0 203.6h1M419.8 202.5h1M418.0 203.6h1M414.8 208.0h1.3M417.1 217.2h1M416.8 213.2h1.3M417.8 213.3h1.3M417.0 212.9h1M417.0 217.4h0.8M420.2 208.0h1M420.8 203.1h0.8M421.3 211.5h1M417.6 216.3h1M414.1 206.9h1.3M419.4 201.6h1M416.6 213.2h1.3M417.3 203.1h0.8M417.3 202.7h0.8M416.0 213.1h1.3M415.4 206.4h0.8M421.2 207.7h1M418.5 199.9h1.3M417.0 215.4h0.8M419.0 214.4h0.8M419.2 202.8h0.8M417.3 204.5h1M419.4 200.3h1M416.6 203.9h1.3M418.9 218.3h1M419.2 216.5h1.3M420.3 214.0h1.3M417.6 207.0h1M419.3 209.4h1.3M418.0 207.1h1M417.2 211.5h0.8M417.5 205.0h1M418.5 201.7h1.3M420.2 204.8h0.8M416.0 206.3h0.8M419.6 215.0h1.3M419.3 211.6h0.8M421.0 207.0h1M415.9 203.4h0.8M416.7 202.5h1.3M417.2 216.9h1M418.1 212.0h1.3M420.9 214.8h1.3M420.0 211.1h1.3M417.4 211.3h1M415.1 204.4h1M420.2 211.0h0.8M422.1 211.9h0.8M417.2 217.9h1M417.5 216.6h1M419.7 208.8h1.3M416.0 214.7h0.8M416.2 212.6h1.3M414.2 210.1h0.8M419.7 211.6h1M419.3 218.3h1M416.5 213.0h1M415.5 207.9h1M416.5 201.3h1M419.0 203.8h0.8M416.4 213.8h1M418.3 212.1h1.3M422.2 210.7h0.8M418.0 205.7h1M414.6 206.8h1.3M414.8 212.4h0.8M419.2 214.4h1.3M415.9 213.7h1.3M418.9 218.6h1.3M418.9 218.1h1.3M420.1 215.4h1M416.2 205.4h1M415.5 207.8h1.3M418.8 218.3h0.8M417.8 205.9h1M418.0 200.5h0.8M417.0 202.9h1M422.1 210.0h1.3M419.4 217.5h1M419.2 218.0h0.8M415.9 206.9h1.3M418.3 204.5h1.3M417.7 214.0h0.8M419.0 203.3h1M415.4 214.7h1.3M420.5 203.0h0.8M419.9 207.5h1M417.2 201.8h1M419.0 207.6h1.3M417.8 204.2h1M416.8 215.7h0.8M417.8 214.6h1.3M418.0 200.8h0.8M415.9 213.7h1M418.7 214.7h1M418.1 201.7h1.3M417.3 205.7h0.8M415.2 205.6h1M421.0 205.5h1.3M417.8 211.1h1.3M418.0 212.2h1.3M417.4 207.3h0.8M417.9 206.6h1M418.9 218.5h1.3M420.3 205.8h1.3M415.9 214.6h0.8" stroke-width="1"/>
<path d="M419.1 238.0h1M417.3 236.6h1.3M419.1 225.3h1.3M417.9 229.3h1.3M418.8 228.1h1.3M420.6 227.2h1M419.3 231.4h1.3M420.1 227.7h0.8M415.9 231.6h1.3M419.4 239.8h0.8M420.0 239.8h0.8M419.7 240.0h0.8M418.6 227.9h1M419.4 239.7h1.3M418.9 230.5h1.3M418.4 239.0h1.3M420.6 240.3h1M418.5 231.5h1M419.4 229.9h1.3M420.7 242.6h1M419.8 231.0h1M422.1 235.0h0.8M421.1 236.5h0.8M420.6 238.2h0.8M420.2 240.2h1.3M418.5 237.9h0.8M421.7 236.4h1M421.6 238.7h1.3M418.1 232.9h1M421.8 232.5h1.3M418.6 240.0h0.8M418.0 228.1h1.3M418.5 230.1h0.8M421.8 238.5h0.8M419.6 225.4h1M417.5 241.6h1.3M420.7 226.5h0.8M421.3 239.5h1M419.2 228.5h0.8M418.3 229.5h0.8M417.9 240.0h1M420.0 229.9h0.8M422.0 236.4h1.3M422.1 229.7h1M421.8 229.0h1M416.8 238.4h1M417.4 229.6h0.8M418.9 230.3h1M418.1 229.5h0.8M420.4 228.7h0.8M419.2 232.2h1.3M420.7 227.4h1M419.9 237.1h0.8M416.7 233.8h1M420.0 235.3h0.8M420.4 231.9h1M422.9 234.7h1.3M418.6 238.4h0.8M416.7 232.5h1M422.8 232.7h0.8M423.0 232.9h1.3M421.8 238.8h1.3M418.4 227.4h1M417.2 231.8h1M416.1 235.4h1M420.6 228.9h1.3M421.1 235.3h1.3M419.2 226.1h0.8M418.4 229.1h1.3M421.3 232.3h0.8M417.3 231.9h0.8M419.6 244.1h0.8M417.9 233.3h1M418.6 230.6h1.3M419.3 241.6h1.3M416.7 236.4h1.3M420.9 239.2h1.3M416.4 230.7h1.3M421.3 237.5h1.3M416.4 231.8h0.8M417.4 227.5h1.3M421.5 239.9h1M415.9 231.7h0.8M416.5 231.0h0.8M417.7 240.1h1M419.4 240.7h0.8M418.6 225.1h1M418.7 242.5h1M420.2 232.5h0.8M416.3 230.7h1M420.4 242.0h1M420.0 226.3h0.8M419.7 230.8h1M416.4 233.8h1M419.2 231.5h1.3M418.3 239.4h1M419.6 230.7h1.3M419.4 240.6h1.3M416.2 237.4h1.3M416.4 237.7h1M421.3 240.1h0.8M420.8 242.2h1.3M418.2 226.4h1.3M420.8 229.2h1.3M419.4 228.9h1M421.7 235.0h0.8M416.5 235.0h0.8M419.5 231.7h0.8M417.6 228.9h1.3M417.7 238.8h0.8M418.7 228.0h0.8M420.8 228.8h0.8M418.0 240.1h1M421.1 229.6h0.8M419.8 243.2h1.3M416.5 236.0h1M421.1 232.2h1M417.6 231.6h0.8M419.3 243.8h1.3M420.8 235.6h1.3M420.3 239.5h0.8M417.0 234.4h1.3M417.0 231.0h0.8M420.4 234.3h1.3M420.2 232.3h0.8M419.6 226.5h1.3M421.5 239.6h0.8M421.2 227.5h1.3M422.2 238.7h1M419.2 227.2h1.3M419.4 243.7h1.3M418.4 236.2h1M418.2 226.2h1M415.4 234.2h0.8M421.1 234.3h0.8M423.1 234.8h1M417.6 238.1h1M421.6 231.1h0.8M418.8 239.9h1.3M416.8 230.9h1M420.7 236.6h0.8M417.7 231.5h1M421.8 233.9h1.3M416.5 238.5h0.8M420.1 229.4h0.8M419.1 239.7h0.8M419.4 226.5h0.8M419.0 229.6h1M416.1 237.5h1M420.7 228.3h0.8M419.3 237.6h0.8M418.4 232.3h1.3M418.7 238.0h0.8M419.0 242.4h0.8M417.6 227.1h0.8M418.3 242.8h0.8M418.3 229.1h1.3M419.6 230.0h1M419.5 231.0h1.3M418.4 240.6h1.3M416.9 240.1h0.8M421.5 235.4h1.3M420.6 234.2h1.3M418.8 225.6h0.8M420.4 236.9h0.8M415.9 232.7h1M419.9 228.3h1.3M418.3 226.0h0.8M418.2 227.9h1M419.5 242.3h1.3M418.2 234.8h1.3" stroke-width="1"/>
<path d="M418.6 262.5h1.3M417.7 258.6h1.3M417.6 257.0h1M421.7 257.9h1.3M420.0 252.1h0.8M421.0 257.4h0.8M421.4 255.8h0.8M421.2 259.2h1.3M419.5 254.4h1.3M418.6 259.6h0.8M420.8 253.6h0.8M417.4 257.0h1.3M419.4 263.5h1M419.7 263.2h1M417.5 258.5h0.8M421.0 260.8h0.8M420.0 252.3h1.3M419.8 256.1h1.3M417.7 261.6h1M421.5 256.0h0.8M420.1 257.9h1.3M417.9 258.9h0.8M418.6 261.2h1M418.7 263.3h0.8M422.2 257.0h1M420.7 253.4h1M420.5 256.9h1M419.1 261.1h1M420.2 255.3h1M418.6 253.3h1M419.4 259.4h0.8M420.4 253.5h0.8M419.6 252.1h0.8M418.2 258.6h1M418.6 252.7h0.8M420.1 257.4h1M420.4 261.8h0.8M419.3 253.4h1M420.6 259.6h1.3M418.9 252.1h0.8M418.2 256.1h1.3M419.1 256.0h1.3M417.6 255.0h1.3M419.8 258.6h1M420.3 258.5h1M421.6 256.8h0.8M420.0 262.1h0.8M418.1 254.3h0.8M416.4 256.6h0.8M418.6 260.1h0.8M419.2 254.3h0.8M421.1 257.9h0.8M419.5 259.4h1.3M420.9 256.6h1M418.7 253.1h1.3M419.1 261.1h1M422.3 257.0h1.3M419.1 261.6h1.3M417.0 260.5h1M419.4 252.0h0.8M420.9 254.7h0.8M417.4 254.0h1M418.7 252.8h0.8M420.1 253.2h0.8M420.3 253.2h1.3M421.7 259.2h1M418.7 253.9h1.3M418.5 263.0h0.8M416.7 258.4h1M416.7 257.3h1M419.4 262.4h1.3M420.3 254.9h0.8M417.8 260.4h1.3M418.2 253.0h0.8M418.1 254.4h0.8M421.4 255.2h1M420.8 255.3h1.3M418.3 261.4h1.3M419.4 260.1h1.3M418.5 259.8h0.8M419.7 254.7h0.8M420.3 261.6h0.8M418.0 253.4h1.3M419.8 256.3h1M417.9 261.9h1M420.0 259.5h1" stroke-width="1"/>
<path d="M410.11 207.26h5" stroke-width=".8"/>
</g>
<g transform="translate(329 248.8)"><path d="M0 0h7l3 3v10h-10z" fill="#2b5fae"/><path d="M7 0l3 3h-3z" fill="#9fb8dd"/><path d="M0 4.5h10M0 7.2h10M3.3 0v8M6.8 3v5" stroke="#dfe8f5" stroke-width=".9" fill="none"/><path d="M0 7.2l10 4.2v1.6h-10z" fill="#f2b50c"/></g>
</g>
<g><rect x="325.7" y="270.5" width="97.7" height="62.8" fill="#fdfdfd"/><rect x="326.7" y="271" width="95.7" height="60.8" fill="#dcdcde"/>
<path d="M349 271.500h4.600v8.400z" fill="#4fdde6"/>
<path d="M373.200 309h9.200v9.200h-4.600z" fill="#bfeef0"/><path d="M374 310.500h8.400M375.400 313h7M376.600 315.500h5.800M377.800 317.800h4.600" stroke="#22d6e0" stroke-width="1.300" fill="none"/>
<path d="M353.6 271.5L382.4 271.5L382.4 309.0L373.2 309.0L371.4 308.0L368.6 298.0L363.2 289.5L361.3 287.6L353.6 279.9z" fill="#e6cfe6"/>
<path d="M354.0 272.0h1.5M355.5 272.0h1.5M358.0 272.0h1.5M365.5 272.0h1M373.0 272.0h1.5M376.0 272.0h2M357.5 273.0h1M362.5 273.0h2M370.0 273.0h1M373.0 273.0h2M377.5 274.0h1M354.0 275.0h1.5M360.5 275.0h2M364.0 275.0h1M369.5 275.0h1.5M377.0 275.0h2M379.0 275.0h1M379.0 276.0h1M354.0 277.0h1.5M355.5 277.0h1M358.5 277.0h1M364.5 277.0h2M371.0 277.0h1.5M380.0 277.0h1M356.0 278.0h1M360.5 278.0h1.5M374.0 278.0h1M375.0 278.0h2M377.0 278.0h1.5M381.5 278.0h1M354.0 279.0h1M358.5 279.0h1M370.0 279.0h1M372.0 279.0h1M357.5 281.0h2M369.0 281.0h1.5M373.5 281.0h1M381.5 281.0h2M357.5 282.0h1.5M363.0 282.0h1M366.5 282.0h1M367.5 282.0h2M369.5 282.0h1.5M362.5 283.0h2M371.5 283.0h1M359.0 284.0h1M367.0 284.0h2M364.0 285.0h1.5M367.5 285.0h1M362.5 286.0h1M365.0 286.0h1.5M366.5 286.0h1M363.0 288.0h1.5M365.5 288.0h1M377.0 288.0h1.5M381.5 288.0h1M363.0 289.0h1M367.5 289.0h1M372.5 289.0h1M366.0 290.0h1M380.5 290.0h1M369.5 291.0h2M377.5 291.0h1" stroke="#1fae2f" stroke-width="1" fill="none"/>
<path d="M357.0 272.0h1M361.0 273.0h1.5M375.0 273.0h1M380.0 273.0h2M355.0 274.0h2M359.0 274.0h1M378.5 274.0h1M381.0 274.0h1M373.0 275.0h2M354.0 276.0h2M364.0 276.0h1.5M367.5 276.0h2M371.5 276.0h1.5M357.5 277.0h1M359.5 278.0h1M368.5 278.0h1M370.5 278.0h1M371.5 278.0h1.5M356.0 279.0h1.5M363.5 279.0h1M369.0 279.0h1M380.0 280.0h1.5M362.5 281.0h2M377.5 281.0h1.5M379.0 281.0h1.5M361.0 282.0h1M364.0 282.0h1.5M372.0 282.0h1M374.0 282.0h1M377.0 282.0h1.5M359.5 283.0h1.5M361.0 283.0h1.5M367.5 283.0h1M376.0 283.0h1M360.0 284.0h2M364.0 284.0h1.5M371.5 284.0h1M365.5 285.0h2M370.5 285.0h2M381.0 285.0h2M360.0 286.0h1.5M377.0 286.0h2M381.5 286.0h2M373.5 287.0h1.5M371.0 288.0h1M379.5 288.0h1M365.5 289.0h1M370.5 289.0h2M380.5 289.0h2M368.0 290.0h1M375.5 290.0h1.5M364.0 291.0h1M371.5 291.0h1M374.0 291.0h1M376.5 291.0h1" stroke="#55505c" stroke-width="1" fill="none"/>
<path d="M360.5 272.0h2M363.5 272.0h1M358.5 273.0h1.5M370.5 274.0h2M359.0 275.0h1.5M368.5 275.0h1M372.0 275.0h1M373.0 276.0h2M375.0 276.0h1M381.5 276.0h1M362.5 277.0h2M364.5 279.0h1M360.5 280.0h1M381.5 280.0h1M356.5 281.0h1M378.5 282.0h1M380.5 282.0h2M372.5 283.0h2M365.5 284.0h1.5M373.5 284.0h1M375.5 285.0h2M379.5 285.0h1.5M368.5 286.0h2M364.0 287.0h2M381.5 287.0h1.5M372.5 290.0h1M381.5 290.0h1.5M379.5 291.0h2M370.0 293.0h2M375.0 294.0h1M376.0 294.0h1M381.0 295.0h1M380.5 296.0h1M369.0 297.0h1M378.5 299.0h2M380.5 299.0h1M370.5 300.0h1M375.5 306.0h2M378.5 308.0h1.5" stroke="#d03030" stroke-width="1" fill="none"/>
<path d="M362.5 272.0h1M366.5 272.0h1.5M354.0 273.0h1.5M358.0 274.0h1M361.5 274.0h2M365.5 274.0h1M368.5 274.0h1M355.5 275.0h1.5M357.0 275.0h2M359.5 277.0h1M360.5 277.0h1M381.0 277.0h1.5M357.0 278.0h1M374.0 279.0h1M379.5 279.0h1M371.5 280.0h2M373.5 280.0h2M359.5 281.0h2M361.5 281.0h1M370.5 281.0h2M380.5 281.0h1M356.0 282.0h1.5M358.5 283.0h1M369.5 283.0h2M358.0 284.0h1M362.0 284.0h2M374.5 284.0h2M372.5 285.0h1.5M377.5 285.0h2M372.5 286.0h1M361.0 287.0h1.5M368.0 287.0h2M378.0 287.0h2M380.0 287.0h1.5M362.0 288.0h1M364.5 288.0h1M370.0 288.0h1M373.0 288.0h1M368.5 289.0h2M375.0 289.0h1.5M378.5 289.0h2M371.0 290.0h1.5M377.0 290.0h1M378.0 290.0h1.5M371.0 292.0h1M376.0 292.0h1M365.0 293.0h2M367.0 294.0h1M373.0 294.0h2M368.0 295.0h1M369.0 295.0h1M371.5 295.0h1M372.5 295.0h1M378.5 295.0h1.5M374.5 296.0h2M372.0 297.0h1M374.5 297.0h1M380.0 298.0h1M369.0 299.0h1.5M375.5 299.0h1M378.0 300.0h1M380.0 300.0h2M371.5 301.0h1M374.5 301.0h1M375.5 301.0h1M377.5 301.0h1.5M377.0 303.0h1M381.5 304.0h2M373.0 305.0h2M376.0 305.0h1M378.0 305.0h1M371.0 306.0h1.5M372.5 306.0h1M373.5 306.0h2M379.5 306.0h1M380.5 306.0h1.5M372.0 307.0h2M375.0 307.0h1M371.0 308.0h1M372.0 308.0h1M374.0 308.0h1" stroke="#f4f4f4" stroke-width="1" fill="none"/>
<path d="M364.5 272.0h1M369.5 272.0h1M370.5 272.0h1.5M372.0 272.0h1M378.0 272.0h2M381.0 272.0h1.5M369.0 273.0h1M371.0 273.0h2M376.0 273.0h2M354.0 274.0h1M357.0 274.0h1M364.5 274.0h1M366.5 274.0h1M379.5 274.0h1.5M365.0 275.0h1.5M371.0 275.0h1M356.0 276.0h1M357.0 276.0h2M360.0 276.0h1M363.0 276.0h1M366.5 276.0h1M369.5 276.0h1M377.0 276.0h2M356.5 277.0h1M361.5 277.0h1M366.5 277.0h1.5M368.0 277.0h1M372.5 277.0h2M375.5 277.0h1.5M378.0 277.0h2M354.0 278.0h1M358.0 278.0h1.5M362.0 278.0h1.5M365.5 278.0h1M369.5 278.0h1M373.0 278.0h1M378.5 278.0h1M379.5 278.0h2M355.0 279.0h1M362.5 279.0h1M365.5 279.0h1M366.5 279.0h1.5M371.0 279.0h1M375.0 279.0h1M377.5 279.0h2M380.5 279.0h2M355.0 280.0h1M356.0 280.0h1M357.0 280.0h1.5M359.5 280.0h1M364.5 280.0h1.5M367.0 280.0h1M370.0 280.0h1.5M375.5 280.0h1.5M355.0 281.0h1.5M359.0 282.0h2M362.0 282.0h1M375.0 282.0h1M376.0 282.0h1M357.0 283.0h1.5M368.5 283.0h1M374.5 283.0h1.5M379.0 283.0h1M381.0 283.0h1.5M372.5 284.0h1M379.0 284.0h1.5M359.0 285.0h1.5M362.5 285.0h1.5M374.0 285.0h1.5M363.5 286.0h1.5M362.5 287.0h1.5M366.0 287.0h1M370.0 287.0h1.5M372.5 287.0h1M366.5 288.0h1.5M368.0 288.0h2M374.0 288.0h2M376.0 288.0h1M380.5 288.0h1M364.0 289.0h1.5M376.5 289.0h2M364.0 290.0h1M365.0 290.0h1M367.0 290.0h1M374.5 290.0h1M368.5 291.0h1M365.0 292.0h2M367.0 292.0h1M368.0 292.0h2M370.0 292.0h1M372.0 292.0h1M374.0 292.0h2M377.0 292.0h1M379.0 292.0h1M380.0 292.0h1M369.0 293.0h1M378.0 293.0h1M380.0 293.0h1M366.0 294.0h1M372.0 294.0h1M377.0 294.0h1M379.5 294.0h2M367.0 295.0h1M373.5 295.0h2M375.5 295.0h1M367.0 296.0h1.5M368.5 296.0h1.5M370.0 296.0h1.5M372.5 296.0h1M373.5 296.0h1M373.0 297.0h1.5M375.5 297.0h1.5M378.0 297.0h2M380.0 297.0h2M369.0 298.0h2M372.5 298.0h1M373.5 298.0h1M374.5 298.0h1.5M377.0 298.0h1M381.0 298.0h1.5M370.5 299.0h1M372.5 299.0h1M377.5 299.0h1M371.5 300.0h1M372.5 300.0h1M377.0 300.0h1M379.0 300.0h1M372.5 301.0h2M380.0 301.0h1M381.0 301.0h1M373.5 302.0h1M374.5 302.0h1.5M377.0 302.0h2M379.0 302.0h1M380.0 302.0h1M370.0 303.0h1.5M371.5 303.0h1M373.5 303.0h1M374.5 303.0h1.5M376.0 303.0h1M380.0 303.0h2M371.0 304.0h1M374.5 304.0h2M376.5 304.0h1M377.5 304.0h2M380.5 304.0h1M371.0 305.0h2M375.0 305.0h1M379.0 305.0h1M380.0 305.0h2M377.5 306.0h2M371.0 307.0h1M376.0 307.0h2M379.0 307.0h1.5M380.5 307.0h2M377.0 308.0h1.5" stroke="#e619e6" stroke-width="1" fill="none"/>
<path d="M368.0 272.0h1.5M380.0 272.0h1M364.5 273.0h1M367.5 273.0h1.5M363.5 274.0h1M367.5 274.0h1M369.5 274.0h1M374.5 274.0h1M376.5 274.0h1M362.5 275.0h1.5M376.0 275.0h1M380.0 275.0h2M359.0 276.0h1M361.0 276.0h2M365.5 276.0h1M363.5 278.0h2M366.5 278.0h2M373.0 279.0h1M376.0 279.0h1.5M354.0 280.0h1M358.5 280.0h1M362.5 280.0h2M368.0 280.0h2M379.0 280.0h1M364.5 281.0h1.5M366.0 281.0h2M372.5 281.0h1M373.0 282.0h1M369.0 284.0h1.5M376.5 284.0h1.5M361.5 286.0h1M370.5 286.0h1M373.5 286.0h2M375.5 286.0h1.5M379.0 286.0h1.5M367.0 287.0h1M371.5 287.0h1M373.5 289.0h1.5M369.0 290.0h1M370.0 290.0h1M365.0 291.0h2M367.0 291.0h1.5M375.0 291.0h1.5M381.5 291.0h2M372.0 293.0h2M377.0 293.0h1M379.0 293.0h1M370.0 294.0h2M370.0 295.0h1.5M376.5 295.0h1M380.0 295.0h1M370.0 297.0h1M373.5 299.0h1M376.5 299.0h1M369.0 300.0h1.5M373.5 300.0h1M374.5 300.0h1M375.5 300.0h1.5M369.0 301.0h1.5M371.0 302.0h1.5M376.0 302.0h1M378.0 307.0h1M373.0 308.0h1M376.0 308.0h1M380.0 308.0h1M381.0 308.0h1" stroke="#8a8a90" stroke-width="1" fill="none"/>
<path d="M374.5 272.0h1.5M355.5 273.0h2M365.5 273.0h1M378.0 273.0h2M360.0 274.0h1.5M366.5 275.0h2M370.0 277.0h1M364.5 283.0h1M360.5 285.0h2M368.5 285.0h2M371.5 286.0h1M373.5 290.0h1M372.5 291.0h1.5M378.5 291.0h1" stroke="#19d8e0" stroke-width="1" fill="none"/>
<path d="M372.5 274.0h2M376.0 276.0h1M380.0 276.0h1.5M374.5 277.0h1M377.0 277.0h1M360.5 279.0h1M361.5 279.0h1M366.0 280.0h1M377.0 280.0h2M375.5 281.0h2M365.5 283.0h2M378.0 283.0h1M370.5 284.0h1M380.5 284.0h2M367.5 286.0h1M380.5 286.0h1M375.0 287.0h2M377.0 287.0h1" stroke="#3a3ad0" stroke-width="1" fill="none"/>
<path d="M367.0 293.0h1M368.0 294.0h1M371.5 296.0h1M371.0 298.0h1.5M373.0 304.0h1.5M375.0 308.0h1" stroke="#e8e020" stroke-width="1" fill="none"/>
<path d="M374.0 293.0h1M376.0 293.0h1M378.0 294.0h1.5M377.5 295.0h1M378.5 296.0h1M381.5 299.0h1M372.5 302.0h1M381.0 302.0h1" stroke="#1fc71f" stroke-width="1" fill="none"/>
<path d="M363.200 289.500l5 8" stroke="#e8e020" stroke-width="1"/>
<circle cx="369.600" cy="289.200" r="2.400" fill="#e2e2e6"/><circle cx="367" cy="283" r="1.800" fill="#6a6a72"/><circle cx="373.600" cy="287" r="1.600" fill="#9a9aa0"/><rect x="376" y="299" width="2" height="5.600" fill="#77777f"/><rect x="358" y="278" width="4" height="2.400" fill="#66666e"/>
<g transform="translate(413.4 274.4)" fill="#f4f4f4" stroke="#9c9ca0" stroke-width=".7"><path d="M2.2 1.2h5v.9l-.8.5v2l.8.5v.9h-5v-.9l.8-.5v-2l-.8-.5z"/><path d="M0 3.6h2.6" stroke="#eee" stroke-width=".9"/></g>
<g transform="translate(329 319.5)"><path d="M0 0h7l3 3v10h-10z" fill="#2b5fae"/><path d="M7 0l3 3h-3z" fill="#9fb8dd"/><path d="M0 4.5h10M0 7.2h10M3.3 0v8M6.8 3v5" stroke="#dfe8f5" stroke-width=".9" fill="none"/><path d="M0 7.2l10 4.2v1.6h-10z" fill="#f2b50c"/></g>
</g>
<g><rect x="325.7" y="342.6" width="97.7" height="61.7" fill="#8e8e90"/><rect x="330.6" y="343.6" width="90.1" height="59.6" fill="#fafafa"/><rect x="332.4" y="344.6" width="85.2" height="57" fill="#d9d9dd"/>
<path d="M337.9 347.28V366.49M337.9 371.13V389.01M359.76 347.28V366.49M359.76 371.13V389.01M373.01 347.28V366.49M373.01 371.13V389.01M394.61 347.28V366.49M394.61 371.13V389.01M335.25 374.44H361.75M369.7 374.44H396.2M335.25 387.03H361.75M369.7 387.03H396.2M335.25 351.91H348.5M384.28 351.91H396.2M335.25 364.5H348.5M384.28 364.5H396.2" stroke="#1a1ae0" stroke-width=".8" fill="none"/>
<path d="M340.8 352.6h1.5M344.3 352.6h1.5M339.8 353.6h2M344.8 353.6h1.5M338.8 354.6h3M342.8 354.6h3M338.8 355.6h3M343.8 355.6h1.5M338.8 356.6h3M342.8 356.6h3M338.8 357.6h2M341.8 357.6h1.5M344.3 357.6h1M340.8 358.6h1M342.8 358.6h2M339.8 359.6h3M343.8 359.6h1.5M339.8 360.6h3M343.8 360.6h1.5M339.8 361.6h2M343.8 361.6h1.5M338.8 362.6h1M341.8 362.6h3" stroke="#1a1ae0" stroke-width="1.05" fill="none"/>
<path d="M351.4 353.9h1.5M355.9 353.9h3M351.4 354.9h3M356.4 354.9h1M352.4 355.9h1.5M355.9 355.9h3M354.4 356.9h1M356.4 356.9h3M356.4 357.9h1M352.4 358.9h3M356.4 358.9h2M352.4 359.9h2M356.4 359.9h1M352.4 360.9h2M356.4 360.9h3M351.4 361.9h1.5M353.9 361.9h2M351.4 362.9h3M355.4 362.9h1.5" stroke="#1a1ae0" stroke-width="1.05" fill="none"/>
<path d="M373.9 353.2h3M379.9 353.2h2M373.9 354.2h3M378.9 354.2h1.5M375.9 355.2h1.5M374.9 356.2h3M373.9 357.2h3M377.9 357.2h3M376.9 358.2h1M378.9 359.2h2M374.9 360.2h1M373.9 361.2h1M376.9 361.2h2M379.9 361.2h1M374.9 362.2h1.5M377.4 362.2h1.5M379.9 362.2h1.5M373.9 363.2h1M375.9 363.2h1M378.9 363.2h2" stroke="#1a1ae0" stroke-width="1.05" fill="none"/>
<path d="M387.5 353.2h2M390.5 353.2h3M389.5 354.2h1M391.5 354.2h2M387.5 355.2h1M390.5 355.2h2M393.5 355.2h3M387.5 356.2h1M391.5 356.2h2M388.5 357.2h1M391.5 357.2h1.5M394.0 357.2h3M389.5 358.2h1M392.5 358.2h3M387.5 359.2h1.5M391.0 359.2h3M387.5 360.2h2M390.5 360.2h2M387.5 361.2h1M389.5 361.2h2M392.5 361.2h3M389.5 362.2h2" stroke="#1a1ae0" stroke-width="1.05" fill="none"/>
<path d="M338.8 376.0h1M340.8 376.0h2M340.8 377.0h2M343.8 377.0h2M338.8 378.0h2M341.8 378.0h1M343.8 378.0h1.5M338.8 379.0h1.5M341.3 379.0h1.5M343.8 379.0h2M339.8 380.0h2M343.8 380.0h1M339.8 381.0h1M341.8 381.0h1.5M344.3 381.0h3M339.8 382.0h2M342.8 382.0h2M339.8 383.0h3M343.8 383.0h2M338.8 384.0h1.5M341.3 384.0h1M343.3 384.0h1M340.8 385.0h1M342.8 385.0h1M339.8 386.0h1.5M342.3 386.0h1M344.3 386.0h3" stroke="#1a1ae0" stroke-width="1.05" fill="none"/>
<path d="M351.5 376.7h1.5M354.0 376.7h3M352.5 377.7h1.5M355.0 377.7h1M357.0 377.7h3M351.5 378.7h1.5M355.0 378.7h3M351.5 379.7h1.5M355.0 379.7h1.5M352.5 380.7h2M356.5 380.7h3M355.5 381.7h2M353.5 382.7h1M351.5 383.7h2M351.5 384.7h2M355.5 384.7h2" stroke="#1a1ae0" stroke-width="1.05" fill="none"/>
<path d="M373.9 375.8h2M376.9 375.8h2M379.9 375.8h1.5M373.9 376.8h3M376.9 377.8h1.5M374.9 378.8h2M377.9 378.8h2M373.9 379.8h2M377.9 379.8h1.5M375.9 380.8h1M374.9 381.8h3M373.9 382.8h2M376.9 382.8h1M378.9 382.8h2M375.9 383.8h2M378.9 383.8h1M373.9 384.8h1M375.9 384.8h3M373.9 385.8h3M378.9 385.8h3" stroke="#1a1ae0" stroke-width="1.05" fill="none"/>
<path d="M387.9 376.0h2M391.9 376.0h2M388.9 377.0h1M390.9 377.0h3M387.9 378.0h1.5M390.4 378.0h2M393.4 378.0h1M389.9 379.0h3M393.9 379.0h1.5M387.9 380.0h1M389.9 380.0h2M387.9 381.0h1.5M392.4 381.0h2M389.9 382.0h3M387.9 383.0h3M391.9 383.0h2M388.9 384.0h1.5M391.4 384.0h1M387.9 385.0h3M387.9 386.0h1M390.9 386.0h1M392.9 386.0h1" stroke="#1a1ae0" stroke-width="1.05" fill="none"/>
<path d="M345.85 357.88v6q1 3 3 0M353.8 363.18q3 4 6 0M375.0 364.5q3 3 5 0" stroke="#1a1ae0" stroke-width="1" fill="none"/>
<path d="M347.18 357.61H352.21M357.78 360.0H373.94M380.3 357.61H387.59M345.85 380.67H352.74M361.75 382.39H375.0M381.1 380.67H387.19M354.46 364.5q3 3 6 1M375.0 366.09h3" stroke="#ee22ee" stroke-width=".85" fill="none"/>
<path d="M404.15 347.54h8M405.74 349.13h7M406.27 350.72h8M406.8 352.05h6" stroke="#ee22ee" stroke-width=".9" fill="none"/>
<rect x="404.15" y="346.48" width="2" height="1.4" fill="#19d8e0"/>
<path d="M337.2 347.28h1.4M337.2 371.13h1.4M359.06 347.28h1.4M359.06 371.13h1.4M372.31 347.28h1.4M372.31 371.13h1.4M393.91 347.28h1.4M393.91 371.13h1.4M334.29 351.91h1.4M334.29 364.5h1.4M334.29 374.44h1.4M334.29 387.03h1.4M368.34000000000003 351.91h1.4M368.34000000000003 387.03h1.4M361.75 364.5h1.2M384.28 364.5h1.2" stroke="#22dd44" stroke-width="1.4" fill="none"/>
<path d="M346.51 368.21h3M379.64 368.21h3M347.84 389.41h3M382.29 389.41h3M361.75 366.49h2" stroke="#19d8e0" stroke-width="1" fill="none"/>
<path d="M344.26 350.19v2.4M363.08 351.91v3" stroke="#e02020" stroke-width="1.2"/>
<rect x="356.45" y="391.66" width="15.9" height="3.3" fill="#19d8e0"/><rect x="356.72" y="396.3" width="23.9" height="4.0" fill="#19d8e0"/>
<path d="M357.25 393.39h14M357.51 399.22h9m2 0h8" stroke="#dfe" stroke-width=".8" stroke-dasharray="1.5 .7"/>
<path d="M357.25 397.89h6m3 0h10" stroke="#2a3fe0" stroke-width=".9" stroke-dasharray="1.2 .8"/><path d="M365.73 397.1h8" stroke="#22dd44" stroke-width="1.6"/>
<rect x="403.09" y="386.5" width="10.3" height="2.1" rx="1" fill="#111"/><path d="M405.48 387.56h5" stroke="#ddd" stroke-width=".8" stroke-dasharray="1 .6"/>
<rect x="404.81" y="392.59" width="13.3" height="10.3" fill="#e8e8ee"/>
<path d="M405.21 393.65h5m2 0h4M405.21 395.24h12M413.43 393.65h4M413.43 395.24h4" stroke="#1a1ae0" stroke-width="1.2" fill="none"/>
<rect x="405.48" y="397.1" width="12.2" height="2.4" fill="#19d8e0"/><path d="M405.21 401.87h10m2 0h4" stroke="#ee22ee" stroke-width="1"/><path d="M404.81 400.28h13" stroke="#111" stroke-width=".8"/>
<g transform="translate(414.4 345.4)" fill="#f4f4f4" stroke="#9c9ca0" stroke-width=".7"><path d="M2.2 1.2h5v.9l-.8.5v2l.8.5v.9h-5v-.9l.8-.5v-2l-.8-.5z"/></g>
<g transform="translate(329 391)"><path d="M0 0h7l3 3v10h-10z" fill="#2b5fae"/><path d="M7 0l3 3h-3z" fill="#9fb8dd"/><path d="M0 4.5h10M0 7.2h10M3.3 0v8M6.8 3v5" stroke="#dfe8f5" stroke-width=".9" fill="none"/><path d="M0 7.2l10 4.2v1.6h-10z" fill="#f2b50c"/></g>
</g>
<g><rect x="325.7" y="413.3" width="97.7" height="62.3" fill="#fbfbfb"/><rect x="327.8" y="417.6" width="94" height="54.6" fill="#dadade" stroke="#a83232" stroke-width="1"/><rect x="328.9" y="418.7" width="91.8" height="52.4" fill="none" stroke="#7fe0e6" stroke-width=".6"/>
<rect x="398.85" y="419.26" width="21.2" height="16.6" fill="#0a0a0a"/>
<path d="M403.49 420.72h3.5M410.11 420.72h7M403.49 422.44h3.5M410.11 422.44h9M403.49 424.17h2M410.11 424.17h7M403.49 425.89h2M410.11 425.89h7M403.49 427.61h3.5M410.11 427.61h9M403.49 429.33h2M410.11 429.33h9M403.49 431.06h2M410.11 431.06h8M403.49 432.78h3.5M410.11 432.78h8M403.49 434.5h2M410.11 434.5h9" stroke="#c8c8c8" stroke-width=".8" fill="none"/>
<path d="M361.75 434.5Q365.73 429.86 375.0 429.86T390.9 434.5Q394.61 437.81 394.61 443.11" stroke="#444" stroke-width="1" fill="none"/>
<path d="M351.1 456.5h1M349.5 448.2h2M353.8 445.1h1.5M341.1 446.4h1.5M349.2 452.4h1.5M361.9 446.3h1M348.4 438.2h1.5M346.4 458.0h1M347.8 447.8h1M358.7 439.9h2.5M355.3 453.7h1.5M357.7 447.7h1.5M356.1 447.6h2.5M342.0 453.6h2M352.4 452.2h1M356.1 454.5h1M341.7 447.6h2.5M356.0 439.4h2.5M340.3 448.7h1.5M337.3 449.2h1.5M349.5 454.4h2.5M358.4 446.3h2M347.6 441.3h2.5M341.9 441.7h1M362.1 450.3h2.5M340.8 454.8h2.5M360.5 445.1h1.5M336.3 444.7h1M354.3 446.4h2M344.1 441.4h2M337.5 442.8h2M350.5 443.5h2.5M343.5 442.9h1.5M359.9 441.7h1M337.9 441.0h2.5M338.9 447.9h1M341.7 454.4h2M341.5 441.8h2M348.1 456.5h2M362.6 448.8h1M338.6 455.9h1M347.0 454.2h2.5M355.6 455.7h1M355.0 450.1h1.5M353.1 452.0h1M343.4 449.3h1M359.7 445.0h1M349.4 443.5h1.5M359.4 449.7h2.5M337.4 451.9h1.5M335.6 441.4h1M354.0 450.0h1M361.8 449.0h1.5M353.4 450.7h1.5M351.6 454.1h1.5M338.4 456.3h2.5M343.9 454.2h2.5M350.2 458.8h1.5M356.1 456.9h2M339.5 441.3h2.5M335.6 446.0h1M350.9 439.6h1M334.3 450.9h2M342.4 440.9h1.5M358.2 439.4h1.5M335.3 447.9h1.5M348.1 447.0h1M353.9 442.1h1.5M336.2 443.7h2.5M343.0 454.5h1.5" stroke="#1a1a1a" stroke-width="1" fill="none"/>
<path d="M363.1 453.4h2M370.6 450.3h1M374.5 450.1h2M360.8 447.3h2M371.1 454.5h2.5M375.1 448.9h1M356.1 450.6h1M371.2 454.1h2.5M372.5 448.2h2.5M365.5 450.1h1.5M370.2 452.1h1M360.2 448.2h2M371.9 452.1h2M371.8 452.5h2M367.6 454.6h2M366.7 448.0h2.5M366.8 446.0h2M356.2 451.7h2.5M362.1 446.4h1M375.0 451.8h2M375.7 452.1h1.5M359.9 454.3h1.5M365.3 454.2h2.5M362.6 450.6h1M367.5 454.4h1M364.9 447.3h1.5M373.9 449.3h1M359.8 446.6h2M363.5 452.2h1.5M356.5 451.2h2" stroke="#1a1a1a" stroke-width="1" fill="none"/>
<path d="M355.0 460.8h1.5M359.9 457.7h1M351.5 457.2h2.5M356.2 462.6h2.5M357.2 456.1h2.5M355.7 462.8h1.5M357.7 458.8h1M350.8 458.7h1.5M361.1 457.4h2.5M351.4 459.8h2M359.3 461.6h2M358.7 463.4h2M353.3 460.7h1.5M351.3 459.7h2M351.1 461.9h2M355.7 457.1h2.5M357.9 461.4h2M348.6 457.9h2" stroke="#1a1a1a" stroke-width="1" fill="none"/>
<path d="M372.7 449.5h1.5M373.3 448.1h1.5M377.0 451.5h2M379.5 452.3h1M377.9 449.9h1M383.4 451.8h1M381.7 447.1h1M378.0 445.6h1.5M378.2 446.1h1M380.7 453.0h1M386.7 448.6h1M376.2 448.9h1.5M385.8 449.2h1.5M385.3 448.0h1.5M386.0 448.2h2M379.0 446.9h1M389.3 450.6h2.5M387.8 451.3h2M375.6 448.8h1M390.5 447.9h2.5M376.3 446.8h1.5M377.7 450.8h1.5" stroke="#1a1a1a" stroke-width="1" fill="none"/>
<path d="M335.9 451.8h2M338.0 445.6h1.5M346.4 450.9h1M345.6 450.8h1M335.9 444.7h1M341.2 442.9h1.5M342.6 452.7h1.5M346.6 443.8h1M345.8 441.6h2.5M337.4 451.9h1.5M351.7 445.3h1M335.1 447.9h1M338.5 444.5h1M341.3 452.8h1M340.4 448.2h2M349.7 449.3h2.5M342.0 449.3h2M333.1 449.3h1M340.1 441.8h1.5M335.9 443.8h1.5M345.6 440.5h2M336.1 446.2h1M333.4 445.6h1.5M337.8 446.2h1.5M334.5 448.8h1M342.3 451.4h1.5M340.2 444.5h2.5M348.9 449.6h2M339.3 449.7h2M343.0 451.0h2.5M344.5 447.3h1M332.3 444.5h1M335.8 450.5h2M344.7 452.0h2.5M335.7 444.6h1M350.1 443.8h2.5M343.7 447.8h2.5M347.6 450.7h1.5M333.2 443.0h1M344.0 440.1h1M346.2 449.1h1M343.6 453.4h2M337.1 451.4h2M334.3 450.1h1.5M348.4 445.8h1M346.8 450.4h2.5M347.1 442.1h1.5M339.1 443.3h1M346.5 449.4h1.5M343.9 446.5h2M346.6 448.5h2M346.8 441.2h2.5M349.7 445.3h1.5M340.2 449.5h2M346.0 449.5h1.5M336.0 442.4h1.5M335.4 446.3h1.5M347.1 447.5h1M342.9 440.4h2M336.9 446.0h2.5M336.7 445.3h1M344.8 441.8h1.5M340.7 439.7h2M339.1 447.0h2M341.4 443.1h1.5M348.4 445.9h2M336.4 441.9h2M336.3 445.1h2.5M351.4 447.9h2M343.5 443.1h2M333.6 447.5h1.5M335.9 446.8h2M343.5 445.5h1.5M349.1 442.3h2.5M340.9 449.2h1.5M346.1 445.9h1.5M340.4 447.9h1.5M337.4 452.3h1M338.0 447.8h2M338.6 446.3h2M336.1 448.1h2M348.1 446.0h1.5M341.1 447.0h2M346.1 449.1h1.5M338.5 441.2h1.5" stroke="#22e033" stroke-width="1.2" fill="none"/>
<path d="M358.1 442.8h1.5M355.5 441.0h1.5M357.1 443.0h2M360.8 441.6h1M353.7 438.3h1.5M349.1 440.6h2M360.2 438.8h2M360.3 438.2h2.5M356.7 443.0h2.5M352.6 435.3h2M355.6 443.7h2.5M355.5 438.6h2.5M350.5 439.6h1.5M357.7 433.1h2.5M360.6 443.4h2M356.8 433.3h1M353.7 443.6h1M363.3 440.8h1.5M352.9 441.4h2.5M354.8 443.3h2M359.7 438.2h2.5M359.7 440.6h1.5M357.4 442.1h2M351.7 435.8h2M356.0 440.2h2M359.1 435.5h2M360.7 442.2h1M353.7 441.7h2M356.5 438.8h1.5M353.7 435.0h2.5M356.3 440.9h2.5M360.3 443.4h1M360.1 439.0h2M353.8 434.0h2.5M349.6 437.0h1.5M359.5 439.5h1.5M356.1 443.3h1.5M354.4 433.5h2M355.0 442.7h2.5M356.2 436.5h2M354.1 443.1h1.5M353.2 433.9h2M350.1 436.4h2M350.6 438.7h1.5M359.3 434.1h1M361.9 440.8h1.5M355.6 443.9h1.5M362.9 435.2h1M363.9 439.0h2.5M362.6 441.3h2.5M349.2 437.3h1.5M354.0 442.8h1M359.7 441.2h1M363.1 439.2h1M358.8 441.2h2M354.3 443.3h1M361.9 434.2h2.5M350.2 434.9h1M359.0 433.7h1.5M353.7 443.9h2.5" stroke="#22e033" stroke-width="1.2" fill="none"/>
<path d="M358.8 445.4h1.5M360.1 449.7h2.5M365.6 445.1h1.5M367.9 447.1h2M364.2 444.1h1.5M367.3 449.4h1M365.0 449.6h2M359.8 448.3h2.5M371.2 448.3h2M361.8 448.7h2.5M363.7 444.5h2.5M368.3 450.6h2.5M369.2 446.4h1.5M365.2 446.0h1.5M360.1 450.6h1M364.0 450.1h1M359.6 448.0h1.5M361.5 451.0h2M364.2 451.4h1.5M363.4 446.2h1M365.9 444.6h2.5M358.4 449.0h2.5M365.3 448.9h2.5M367.9 451.1h2M365.7 451.4h2.5M364.0 449.0h1.5M367.6 450.3h1.5M359.2 448.8h1M372.0 448.2h1.5M357.4 449.0h1M360.8 447.3h2M360.2 445.5h1.5M361.5 445.8h2.5M367.2 444.1h1.5M363.3 446.3h1M370.0 448.9h1M365.6 449.5h2M364.4 448.9h2.5M364.4 447.8h2.5M365.1 449.7h2.5" stroke="#22e033" stroke-width="1.2" fill="none"/>
<path d="M356.4 460.9h1M358.5 461.9h2.5M351.7 456.4h1.5M354.2 460.4h2.5M347.8 461.7h2.5M354.6 462.2h2.5M351.3 457.0h2.5M352.8 463.3h2.5M354.2 460.5h1.5M348.4 460.4h1.5M359.0 459.6h1M357.7 460.8h2.5M354.6 459.6h2.5M349.3 457.0h2.5M356.6 456.3h2.5M352.4 456.4h1.5M356.7 461.6h1M353.2 459.2h2.5M352.8 456.9h1.5M352.4 460.9h1M352.3 463.1h2M355.5 456.5h1.5M358.5 461.9h1M357.8 459.6h2M352.2 456.7h2.5" stroke="#22e033" stroke-width="1.2" fill="none"/>
<path d="M349.4 465.7h2.5M347.5 468.8h2.5M351.0 467.9h2.5M350.3 466.0h2.5M346.2 467.7h2M349.8 464.5h2.5M348.2 468.8h1.5M345.8 467.1h2M346.8 467.9h1.5M345.6 467.5h1.5M348.8 466.5h1M350.7 466.7h2M350.4 465.4h1M350.9 467.7h2.5" stroke="#22e033" stroke-width="1.2" fill="none"/>
<path d="M377.5 451.7h1M380.2 447.2h2.5M379.7 449.4h1.5M375.9 446.8h1.5M377.9 448.5h2M380.5 447.1h2M376.4 448.1h1M374.1 447.8h2.5M378.5 449.8h1M380.1 449.6h1.5M375.1 447.6h2M377.7 447.5h2.5M382.5 449.4h2M378.1 450.7h1M382.1 450.4h2M379.2 450.2h2M378.4 447.1h2.5M382.2 447.9h1.5M384.1 448.9h2M383.6 448.1h1.5M381.6 450.9h1.5M380.4 446.8h1" stroke="#22e033" stroke-width="1.2" fill="none"/>
<g fill="none" stroke="#22e033" stroke-width="1.1"><rect x="388.25" y="445.37" width="7.3" height="6.0" rx="2"/><ellipse cx="400.18" cy="448.41" rx="4.2" ry="3.3"/><ellipse cx="331.94" cy="447.75" rx="2.6" ry="3"/><ellipse cx="347.84" cy="466.3" rx="3.4" ry="3"/><ellipse cx="382.95" cy="449.74" rx="3" ry="2.6"/></g>
<path d="M376.99 442.19l4 7M380.3 442.19l3 6M388.25 442.19h4M400.18 442.72l2 4M401.5 451.73l2 4M390.9 451.73v4" stroke="#333" stroke-width="1" fill="none"/>
<path d="M349.5 429.2h1.2M354.5 426.55h1.2M338.6 436.49h1.2M343.3 436.89h1.2M363.8 437.81h1.2M334.6 441.79h1.2M329.3 453.05h1.2M335.3 454.64h1.2M342.6 457.69h1.2M343.3 461.0h1.2M354.5 467.63h1.2M366.4 455.04h1.2M367.1 443.78h1.2M373.7 456.36h1.2M377.0 442.19h1.2M380.4 442.72h1.2M379.7 455.04h1.2M383.0 455.44h1.2M385.7 455.04h1.2M390.3 455.04h1.2M400.2 442.19h1.2M404.2 455.7h1.2M399.6 455.04h1.2M357.2 464.98h1.2M349.9 436.49h1.2M345.9 442.19h1.2M361.1 451.73h1.2M357.2 450.4h1.2M369.4 451.06h1.2" stroke="#e02020" stroke-width="1.2" fill="none"/>
<rect x="361.49" y="466.04" width="39.1" height="1.5" fill="#161616"/><path d="M361.49 466.83h39" stroke="#eee" stroke-width=".4" stroke-dasharray="1.8 .9"/>
<rect x="402.3" y="466.04" width="17.8" height="3.2" fill="#e6e6e6" stroke="#22e033" stroke-width=".8"/><rect x="403.09" y="466.83" width="6.0" height="1.6" fill="#e02020"/>
<g transform="translate(414.4 416.6)" fill="#f4f4f4" stroke="#b0b0b4" stroke-width=".4"><path d="M2.6 0h3.6v.9l-.6.5v2.4l.8.7v.9h-4v-.9l.8-.7v-2.4l-.6-.5z"/></g>
<g transform="translate(329 461.5)"><path d="M0 0h7l3 3v10h-10z" fill="#2b5fae"/><path d="M7 0l3 3h-3z" fill="#9fb8dd"/><path d="M0 4.5h10M0 7.2h10M3.3 0v8M6.8 3v5" stroke="#dfe8f5" stroke-width=".9" fill="none"/><path d="M0 7.2l10 4.2v1.6h-10z" fill="#f2b50c"/></g>
</g>
<text x="430.5" y="210.5" font-size="10.5" fill="#f2f3f5" textLength="79.5" lengthAdjust="spacingAndGlyphs" font-weight="bold" class="sh" >PHONG-thu-vien</text>
<text x="430.5" y="222.1" font-size="8.57" fill="#939cac" textLength="138.5" lengthAdjust="spacingAndGlyphs" >Last Opened Wednesday, January 12,</text>
<text x="430.5" y="233.0" font-size="8.41" fill="#939cac" textLength="61" lengthAdjust="spacingAndGlyphs" >2022 7:31:45 PM</text>
<text x="430.5" y="282" font-size="10.11" fill="#f2f3f5" textLength="84" lengthAdjust="spacingAndGlyphs" font-weight="bold" class="sh" >Floor Plan Sample</text>
<text x="430.5" y="293.6" font-size="8.57" fill="#939cac" textLength="138.5" lengthAdjust="spacingAndGlyphs" >Last Opened Wednesday, January 12,</text>
<text x="430.5" y="304.5" font-size="8.68" fill="#939cac" textLength="66.5" lengthAdjust="spacingAndGlyphs" >2022 11:03:45 AM</text>
<text x="430.5" y="353" font-size="10.29" fill="#f2f3f5" textLength="92" lengthAdjust="spacingAndGlyphs" font-weight="bold" class="sh" >Data Extraction and</text>
<text x="430.5" y="366.6" font-size="10.35" fill="#f2f3f5" textLength="95.3" lengthAdjust="spacingAndGlyphs" font-weight="bold" class="sh" >Multileaders Sample</text>
<text x="430.5" y="378.20000000000005" font-size="8.57" fill="#939cac" textLength="138.5" lengthAdjust="spacingAndGlyphs" >Last Opened Wednesday, January 12,</text>
<text x="430.5" y="389.1" font-size="8.68" fill="#939cac" textLength="66.5" lengthAdjust="spacingAndGlyphs" >2022 11:03:45 AM</text>
<text x="430.5" y="424.3" font-size="9.97" fill="#f2f3f5" textLength="81.3" lengthAdjust="spacingAndGlyphs" font-weight="bold" class="sh" >Assembly Sample</text>
<text x="430.5" y="435.90000000000003" font-size="8.57" fill="#939cac" textLength="138.5" lengthAdjust="spacingAndGlyphs" >Last Opened Wednesday, January 12,</text>
<text x="430.5" y="446.8" font-size="8.68" fill="#939cac" textLength="66.5" lengthAdjust="spacingAndGlyphs" >2022 11:03:45 AM</text>
<rect x="315.5" y="168.5" width="266" height="101" fill="none" stroke="#fd0000" stroke-width="3"/>
<clipPath id="c1x"><path d="M590 118h17.300v43h-9.500v-12h-6.200l-1.600-8z"/></clipPath>
<g clip-path="url(#c1x)"><text transform="translate(583.400 159.800) scale(1.200 1)" x="0" y="0" font-size="53.200" font-weight="bold" fill="#fd0000">1</text></g>
<rect x="325" y="530.5" width="262" height="19" fill="url(#gBar)" mask="url(#mBar)"/>
<g fill="#7b8392"><rect x="431.5" y="536" width="5.5" height="2.6"/><rect x="431.5" y="539.6" width="5.5" height="2.6"/><rect x="431.5" y="543.2" width="5.5" height="2.6"/></g>
<rect x="448.3" y="534.5" width="13.5" height="13.3" rx="2.2" fill="#242a34"/>
<g fill="#8a92a0"><rect x="451.5" y="537.3" width="2.6" height="1.8"/><rect x="455.6" y="537.3" width="3.4" height="0.9"/><rect x="451.5" y="540.5" width="2.6" height="1.8"/><rect x="455.6" y="540.5" width="3.4" height="0.9"/><rect x="451.5" y="543.7" width="2.6" height="1.8"/><rect x="455.6" y="543.7" width="3.4" height="0.9"/></g>
<g fill="#4b5260"><rect x="473.2" y="536" width="4.6" height="2.6"/><rect x="473.2" y="539.6" width="4.6" height="2.6"/><rect x="473.2" y="543.2" width="4.6" height="2.6"/></g>
<text x="688.5" y="191" font-size="12.5" fill="#b4b4b4" textLength="73.7" lengthAdjust="spacingAndGlyphs" font-weight="bold" class="hd" >Notifications</text>
<rect x="687" y="199" width="116" height="92" fill="#000" opacity=".55" filter="url(#fsh)"/>
<rect x="688" y="199" width="114" height="90" fill="url(#gPink)"/>
<rect x="688.5" y="199.5" width="114" height="89" fill="none" stroke="#fff" stroke-opacity=".55"/>
<rect x="688" y="288" width="114" height="1" fill="#c98585"/>
<text x="697.7" y="219.3" font-size="9.12" fill="#1e1e1e" textLength="94.6" lengthAdjust="spacingAndGlyphs" >January 2022: Have You</text>
<text x="697.7" y="231" font-size="9.35" fill="#1e1e1e" textLength="88.3" lengthAdjust="spacingAndGlyphs" >Tried: Looking Back at</text>
<text x="697.7" y="242.6" font-size="8.87" fill="#1e1e1e" textLength="18.8" lengthAdjust="spacingAndGlyphs" >2021</text>
<text x="697.7" y="254.6" font-size="9.14" fill="#2020f4" textLength="97.3" lengthAdjust="spacingAndGlyphs" >Layer States, Associative</text>
<text x="697.7" y="266" font-size="9.33" fill="#2020f4" textLength="99.3" lengthAdjust="spacingAndGlyphs" >Dimensions, Just Grip It!,</text>
<text x="697.7" y="277.5" font-size="9.49" fill="#2020f4" textLength="118.1" lengthAdjust="spacingAndGlyphs" >Action Into Macros, and more</text>
<text x="688" y="313.4" font-size="12.34" fill="#b4b4b4" textLength="47" lengthAdjust="spacingAndGlyphs" font-weight="bold" class="hd" >Connect</text>
<rect x="687" y="322" width="116" height="126" fill="#000" opacity=".5" filter="url(#fsh)"/>
<rect x="688" y="322.300" width="114" height="123.700" fill="#d3d3d3"/>
<rect x="688.5" y="322.800" width="114" height="122.700" fill="none" stroke="#ececec"/>
<text x="698.4" y="345.7" font-size="9.9" fill="#222" textLength="69" lengthAdjust="spacingAndGlyphs" font-weight="bold" >Welcome Minh!</text>
<text x="698.4" y="363.3" font-size="9.28" fill="#444" textLength="112.6" lengthAdjust="spacingAndGlyphs" >(18510201513@uah.edu.vn)</text>
<text x="698.4" y="380.4" font-size="9.1" fill="#222" textLength="63.6" lengthAdjust="spacingAndGlyphs" font-weight="bold" >Send Feedback</text>
<text x="698.4" y="394.7" font-size="9.7" fill="#444" textLength="120.7" lengthAdjust="spacingAndGlyphs" >Help us improve our products</text>
<rect x="698.4" y="402.6" width="110" height="19.8" rx="2" fill="url(#gBtn)"/>
<rect x="698.9" y="403.1" width="110" height="18.8" rx="2" fill="none" stroke="#0a4fc0" stroke-opacity=".6"/>
<text x="741.8" y="415.6" font-size="9.44" fill="#fff" textLength="63.0" lengthAdjust="spacingAndGlyphs" >Send Feedback</text>
</svg></body></html>
